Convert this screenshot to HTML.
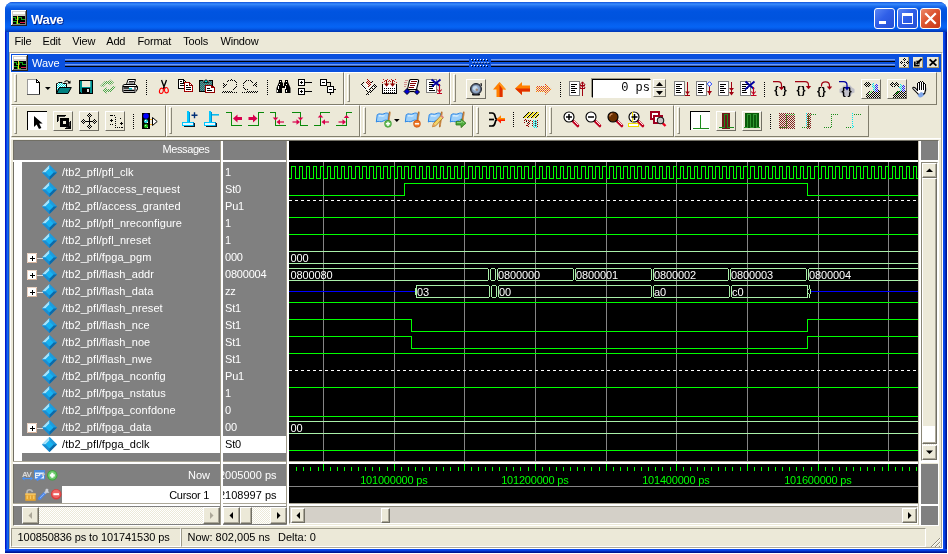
<!DOCTYPE html>
<html lang="en"><head><meta charset="utf-8"><title>Wave</title>
<style>
html,body{margin:0;padding:0;background:#fff;}
body{width:948px;height:554px;position:relative;overflow:hidden;font-family:"Liberation Sans",sans-serif;font-size:11px;color:#000;}
.a{position:absolute;}
.t{position:absolute;white-space:nowrap;line-height:13px;height:13px;}
#win{left:5px;top:2px;width:942px;height:551px;background:#0a3fd0;border-radius:8px 8px 0 0;overflow:hidden;}
#title{left:0;top:0;width:942px;height:30px;background:linear-gradient(to bottom,#0a47d0 0px,#2a78f3 1px,#3385f8 2.5px,#1f70ef 4px,#0657e3 7px,#0054e0 10px,#0053de 17px,#0560f0 22px,#0664f4 25px,#0458e6 27px,#0045cc 28.5px,#0033b3 30px);}
#lb{left:0;top:30px;width:4px;height:521px;background:linear-gradient(to right,#0019cf 0,#0019cf 1px,#0a3fe0 1px,#0a3fe0 2px,#1468ee 2px,#1468ee 3px,#0852de 3px);}
#rb{left:938px;top:30px;width:4px;height:521px;background:linear-gradient(to right,#0a48ee 0,#0a48ee 1px,#0540e0 1px,#0540e0 2px,#0028b4 2px,#0028b4 3px,#001494 3px);}
#bb{left:0;top:547px;width:942px;height:4px;background:linear-gradient(to bottom,#0a48ee 0,#0a48ee 1px,#0540e0 1px,#0540e0 2px,#0028b4 2px,#0028b4 3px,#001494 3px);}
#client{left:9px;top:32px;width:934px;height:517px;background:#ece9d8;}
.cap{position:absolute;top:6px;width:21px;height:21px;box-sizing:border-box;border:1px solid #fff;border-radius:3px;}
.tb{position:absolute;box-sizing:border-box;border-top:1px solid #fff;border-left:1px solid #fff;border-right:1px solid #807d6c;border-bottom:1px solid #807d6c;background:#ece9d8;}
.grip{position:absolute;width:3px;box-sizing:border-box;border-top:1px solid #fff;border-left:1px solid #fff;border-right:1px solid #8a8778;border-bottom:1px solid #8a8778;}
.sep{position:absolute;width:1px;height:15px;background:repeating-linear-gradient(to bottom,#000 0,#000 1px,transparent 1px,transparent 2px);}
.ic{position:absolute;width:16px;height:16px;overflow:visible;}
.raised{position:absolute;box-sizing:border-box;border-top:1px solid #fff;border-left:1px solid #fff;border-right:1px solid #716f64;border-bottom:1px solid #716f64;background:#ece9d8;}
.sunk{position:absolute;box-sizing:border-box;border-top:1px solid #404040;border-left:1px solid #404040;border-right:1px solid #fff;border-bottom:1px solid #fff;background:#fff;}
.sbb{position:absolute;width:16px;height:16px;box-sizing:border-box;border-top:1px solid #fff;border-left:1px solid #fff;border-right:1px solid #716f64;border-bottom:1px solid #716f64;background:#ece9d8;box-shadow:inset -1px -1px 0 #aca899;}
.dither{background-color:#f6f4ec;background-image:repeating-conic-gradient(#fff 0 25%,#ece9d8 0 50%);background-size:2px 2px;}
.nm{position:absolute;left:62px;white-space:nowrap;color:#fff;line-height:17px;height:17px;letter-spacing:0.08px;}
.vl{position:absolute;left:225px;white-space:nowrap;color:#fff;line-height:17px;height:17px;letter-spacing:-0.2px;}
.wv{position:absolute;white-space:nowrap;color:#fff;line-height:13px;height:13px;letter-spacing:-0.12px;}
.gl{position:absolute;white-space:nowrap;color:#00ff00;line-height:13px;height:13px;letter-spacing:-0.2px;}
</style></head>
<body>
<div id="root" class="a" style="left:0;top:0;width:948px;height:554px;will-change:transform;">
<div id="win" class="a"><div id="title" class="a"></div><div id="lb" class="a"></div><div id="rb" class="a"></div><div id="bb" class="a"></div></div>
<svg class="a" style="left:11px;top:10px" width="16" height="16" viewBox="0 0 16 16"><g shape-rendering="crispEdges"><rect x="0" y="0" width="16" height="16" fill="#d4d0c8"/><rect x="0" y="0" width="15" height="1" fill="#fff"/><rect x="0" y="0" width="1" height="15" fill="#fff"/><rect x="15" y="0" width="1" height="16" fill="#202020"/><rect x="0" y="15" width="16" height="1" fill="#202020"/><rect x="14" y="1" width="1" height="14" fill="#808080"/><rect x="1" y="14" width="14" height="1" fill="#808080"/><rect x="2" y="2" width="12" height="2" fill="#fff"/><rect x="2" y="6" width="12" height="8" fill="#000"/><path d="M2 7.5 H4.5 V9.5 H6 M7 9.5 H7.5 V7.5 H10.5 V9.5 H14 M2 11.5 H5.5 V13.5 H6 M7 13.5 H8.5 V12.5" fill="none" stroke="#18a818" stroke-width="1"/><rect x="6" y="6" width="1" height="8" fill="#f0e020"/><rect x="9" y="12" width="5" height="1" fill="#e01848"/></g></svg><div class="t" style="left:31px;top:12px;color:#fff;font-weight:bold;font-size:13px;line-height:15px;height:15px;letter-spacing:-0.3px;text-shadow:1px 1px 0 #0a2a90;">Wave</div><div class="cap" style="left:874px;top:8px;background:linear-gradient(135deg,#5a86f4 0%,#2f5fe8 45%,#2450d4 100%);"><div class="a" style="left:4px;top:12px;width:7px;height:3px;background:#fff;"></div></div><div class="cap" style="left:897px;top:8px;background:linear-gradient(135deg,#5a86f4 0%,#2f5fe8 45%,#2450d4 100%);"><div class="a" style="left:4px;top:4px;width:11px;height:11px;box-sizing:border-box;border:1px solid #fff;border-top-width:3px;"></div></div><div class="cap" style="left:920px;top:8px;background:linear-gradient(135deg,#ec8a6a 0%,#dc5430 45%,#c8381a 100%);"><svg class="a" style="left:0;top:0" width="19" height="19" viewBox="0 0 19 19"><path d="M5 5 L14 14 M14 5 L5 14" stroke="#fff" stroke-width="2.2" stroke-linecap="square"/></svg></div><div id="client" class="a"></div>
<div class="t" style="left:14.5px;top:35px;letter-spacing:-0.2px;">File</div><div class="t" style="left:42.5px;top:35px;letter-spacing:-0.2px;">Edit</div><div class="t" style="left:72.3px;top:35px;letter-spacing:-0.2px;">View</div><div class="t" style="left:106.3px;top:35px;letter-spacing:-0.2px;">Add</div><div class="t" style="left:137.5px;top:35px;letter-spacing:-0.2px;">Format</div><div class="t" style="left:183.3px;top:35px;letter-spacing:-0.2px;">Tools</div><div class="t" style="left:220.5px;top:35px;letter-spacing:-0.2px;">Window</div><div class="a" style="left:9px;top:52px;width:934px;height:497px;box-sizing:border-box;border:1px solid;border-color:#aca899 #fff #fff #aca899;"></div><div class="a" style="left:10px;top:53px;width:932px;height:495px;box-sizing:border-box;border:1px solid;border-color:#fff #aca899 #aca899 #fff;"></div>
<div class="a" style="left:11px;top:54px;width:930px;height:18px;background:#0a50de;"></div><svg class="a" style="left:12px;top:55px" width="16" height="16" viewBox="0 0 16 16"><g shape-rendering="crispEdges"><rect x="0" y="0" width="16" height="16" fill="#d4d0c8"/><rect x="0" y="0" width="15" height="1" fill="#fff"/><rect x="0" y="0" width="1" height="15" fill="#fff"/><rect x="15" y="0" width="1" height="16" fill="#202020"/><rect x="0" y="15" width="16" height="1" fill="#202020"/><rect x="14" y="1" width="1" height="14" fill="#808080"/><rect x="1" y="14" width="14" height="1" fill="#808080"/><rect x="2" y="2" width="12" height="2" fill="#fff"/><rect x="2" y="6" width="12" height="8" fill="#000"/><path d="M2 7.5 H4.5 V9.5 H6 M7 9.5 H7.5 V7.5 H10.5 V9.5 H14 M2 11.5 H5.5 V13.5 H6 M7 13.5 H8.5 V12.5" fill="none" stroke="#18a818" stroke-width="1"/><rect x="6" y="6" width="1" height="8" fill="#f0e020"/><rect x="9" y="12" width="5" height="1" fill="#e01848"/></g></svg><div class="t" style="left:32px;top:57px;color:#fff;">Wave</div><div class="a" style="left:65px;top:59px;width:404px;height:1px;background:#6f9df2;"></div><div class="a" style="left:65px;top:60px;width:404px;height:1px;background:#3a62c0;"></div><div class="a" style="left:65px;top:61px;width:404px;height:1px;background:#000;"></div><div class="a" style="left:65px;top:64px;width:404px;height:1px;background:#6f9df2;"></div><div class="a" style="left:65px;top:65px;width:404px;height:1px;background:#3a62c0;"></div><div class="a" style="left:65px;top:66px;width:404px;height:1px;background:#000;"></div><div class="a" style="left:491px;top:59px;width:404px;height:1px;background:#6f9df2;"></div><div class="a" style="left:491px;top:60px;width:404px;height:1px;background:#3a62c0;"></div><div class="a" style="left:491px;top:61px;width:404px;height:1px;background:#000;"></div><div class="a" style="left:491px;top:64px;width:404px;height:1px;background:#6f9df2;"></div><div class="a" style="left:491px;top:65px;width:404px;height:1px;background:#3a62c0;"></div><div class="a" style="left:491px;top:66px;width:404px;height:1px;background:#000;"></div><svg class="a" style="left:470px;top:58px" width="20" height="10" viewBox="0 0 20 10"><rect x="2" y="2" width="1" height="1" fill="#000"/><rect x="1" y="1" width="1" height="1" fill="#fff"/><rect x="5" y="2" width="1" height="1" fill="#000"/><rect x="4" y="1" width="1" height="1" fill="#fff"/><rect x="8" y="2" width="1" height="1" fill="#000"/><rect x="7" y="1" width="1" height="1" fill="#fff"/><rect x="11" y="2" width="1" height="1" fill="#000"/><rect x="10" y="1" width="1" height="1" fill="#fff"/><rect x="14" y="2" width="1" height="1" fill="#000"/><rect x="13" y="1" width="1" height="1" fill="#fff"/><rect x="17" y="2" width="1" height="1" fill="#000"/><rect x="16" y="1" width="1" height="1" fill="#fff"/><rect x="3.5" y="5" width="1" height="1" fill="#000"/><rect x="2.5" y="4" width="1" height="1" fill="#fff"/><rect x="6.5" y="5" width="1" height="1" fill="#000"/><rect x="5.5" y="4" width="1" height="1" fill="#fff"/><rect x="9.5" y="5" width="1" height="1" fill="#000"/><rect x="8.5" y="4" width="1" height="1" fill="#fff"/><rect x="12.5" y="5" width="1" height="1" fill="#000"/><rect x="11.5" y="4" width="1" height="1" fill="#fff"/><rect x="15.5" y="5" width="1" height="1" fill="#000"/><rect x="14.5" y="4" width="1" height="1" fill="#fff"/><rect x="18.5" y="5" width="1" height="1" fill="#000"/><rect x="17.5" y="4" width="1" height="1" fill="#fff"/><rect x="2" y="8" width="1" height="1" fill="#000"/><rect x="1" y="7" width="1" height="1" fill="#fff"/><rect x="5" y="8" width="1" height="1" fill="#000"/><rect x="4" y="7" width="1" height="1" fill="#fff"/><rect x="8" y="8" width="1" height="1" fill="#000"/><rect x="7" y="7" width="1" height="1" fill="#fff"/><rect x="11" y="8" width="1" height="1" fill="#000"/><rect x="10" y="7" width="1" height="1" fill="#fff"/><rect x="14" y="8" width="1" height="1" fill="#000"/><rect x="13" y="7" width="1" height="1" fill="#fff"/><rect x="17" y="8" width="1" height="1" fill="#000"/><rect x="16" y="7" width="1" height="1" fill="#fff"/></svg><div class="a" style="left:899px;top:57px;width:10px;height:11px;background:#ece9d8;box-shadow:inset -1px -1px 0 #a89868;"></div><svg class="a" style="left:899px;top:57px" width="12" height="11" viewBox="0 0 12 11"><g shape-rendering="crispEdges"><rect x="5" y="1" width="1" height="1" fill="#000"/><rect x="5" y="3" width="1" height="1" fill="#000"/><rect x="5" y="5" width="1" height="1" fill="#000"/><rect x="5" y="7" width="1" height="1" fill="#000"/><rect x="5" y="9" width="1" height="1" fill="#000"/><rect x="1" y="5" width="1" height="1" fill="#000"/><rect x="3" y="5" width="1" height="1" fill="#000"/><rect x="7" y="5" width="1" height="1" fill="#000"/><rect x="9" y="5" width="1" height="1" fill="#000"/><rect x="4" y="2" width="1" height="1" fill="#000"/><rect x="6" y="2" width="1" height="1" fill="#000"/><rect x="2" y="4" width="1" height="1" fill="#000"/><rect x="2" y="6" width="1" height="1" fill="#000"/><rect x="8" y="4" width="1" height="1" fill="#000"/><rect x="8" y="6" width="1" height="1" fill="#000"/><rect x="4" y="8" width="1" height="1" fill="#000"/><rect x="6" y="8" width="1" height="1" fill="#000"/></g></svg><div class="a" style="left:913px;top:57px;width:10px;height:11px;background:#ece9d8;box-shadow:inset -1px -1px 0 #a89868;"></div><svg class="a" style="left:913px;top:57px" width="12" height="11" viewBox="0 0 12 11"><path d="M1.8 4.5 V8.6 H6.5" stroke="#000" stroke-width="1.7" fill="none"/><path d="M3.5 7 L8.6 1.9" stroke="#000" stroke-width="2"/><path d="M2.6 3.8 H6.6 V7.8 Z" fill="#000"/></svg><div class="a" style="left:927px;top:57px;width:12px;height:11px;background:#ece9d8;box-shadow:inset -1px -1px 0 #a89868;"></div><svg class="a" style="left:927px;top:57px" width="12" height="11" viewBox="0 0 12 11"><path d="M2.6 2.4 L9.4 8.6 M9.4 2.4 L2.6 8.6" stroke="#000" stroke-width="1.9" fill="none"/></svg>
<svg class="a" width="0" height="0" style="left:0;top:0"><defs><pattern id="pcy" width="2" height="2" patternUnits="userSpaceOnUse"><rect width="2" height="2" fill="#fff"/><rect width="1" height="1" fill="#00e0e0"/><rect x="1" y="1" width="1" height="1" fill="#00e0e0"/></pattern><pattern id="pgr" width="2" height="2" patternUnits="userSpaceOnUse"><rect width="1" height="1" fill="#4aa84a"/><rect x="1" y="1" width="1" height="1" fill="#4aa84a"/></pattern><pattern id="ptl" width="2" height="2" patternUnits="userSpaceOnUse"><rect width="2" height="2" fill="#008080"/><rect width="1" height="1" fill="#808080"/><rect x="1" y="1" width="1" height="1" fill="#808080"/></pattern><pattern id="por" width="2" height="2" patternUnits="userSpaceOnUse"><rect width="1" height="1" fill="#ff8000"/><rect x="1" y="1" width="1" height="1" fill="#e04020"/></pattern><pattern id="pbk" width="2" height="2" patternUnits="userSpaceOnUse"><rect width="1" height="1" fill="#000"/><rect x="1" y="1" width="1" height="1" fill="#000"/></pattern><pattern id="prd" width="2" height="2" patternUnits="userSpaceOnUse"><rect width="1" height="1" fill="#802020"/><rect x="1" y="1" width="1" height="1" fill="#802020"/></pattern><pattern id="pcb" width="2" height="2" patternUnits="userSpaceOnUse"><rect width="1" height="1" fill="#00e8f0"/><rect x="1" y="1" width="1" height="1" fill="#00e8f0"/></pattern><pattern id="pbl" width="2" height="2" patternUnits="userSpaceOnUse"><rect width="1" height="1" fill="#2020ff"/><rect x="1" y="1" width="1" height="1" fill="#2020ff"/></pattern><pattern id="pwh" width="2" height="2" patternUnits="userSpaceOnUse"><rect width="1" height="1" fill="#fff"/><rect x="1" y="1" width="1" height="1" fill="#fff"/></pattern></defs></svg><div class="tb" style="left:11px;top:72px;width:333px;height:33px;"></div><div class="grip" style="left:14px;top:74px;height:28px;"></div><div class="tb" style="left:344px;top:72px;width:106px;height:33px;"></div><div class="grip" style="left:347px;top:74px;height:28px;"></div><div class="tb" style="left:450px;top:72px;width:487px;height:33px;"></div><div class="grip" style="left:453px;top:74px;height:28px;"></div><div class="tb" style="left:11px;top:105px;width:155px;height:32px;"></div><div class="grip" style="left:14px;top:107px;height:27px;"></div><div class="tb" style="left:166px;top:105px;width:194px;height:32px;"></div><div class="grip" style="left:169px;top:107px;height:27px;"></div><div class="tb" style="left:360px;top:105px;width:113px;height:32px;"></div><div class="grip" style="left:363px;top:107px;height:27px;"></div><div class="tb" style="left:473px;top:105px;width:73px;height:32px;"></div><div class="grip" style="left:476px;top:107px;height:27px;"></div><div class="tb" style="left:546px;top:105px;width:128px;height:32px;"></div><div class="grip" style="left:549px;top:107px;height:27px;"></div><div class="tb" style="left:674px;top:105px;width:195px;height:32px;"></div><div class="grip" style="left:677px;top:107px;height:27px;"></div><svg class="ic" style="left:27px;top:79px" viewBox="0 0 16 16"><g shape-rendering="crispEdges"><rect x="1" y="1" width="11" height="14" fill="#fff"/><rect x="0" y="0" width="1" height="16" fill="#9a9a9a"/><rect x="0" y="0" width="10" height="1" fill="#9a9a9a"/><rect x="12" y="3" width="1" height="13" fill="#000"/><rect x="0" y="15" width="13" height="1" fill="#5a5a5a"/><rect x="9" y="0" width="1" height="4" fill="#000"/><rect x="9" y="3" width="4" height="1" fill="#000"/></g><path d="M9.5 0.5 L12.5 3.5" stroke="#000" stroke-width="1" fill="none"/><rect x="10" y="2" width="1" height="1" fill="#fff"/></svg><svg class="a" style="left:45px;top:87px" width="6" height="3" viewBox="0 0 6 3"><path d="M0 0 H5.6 L2.8 3 Z" fill="#000"/></svg><svg class="ic" style="left:56px;top:80px" viewBox="0 0 16 16"><path d="M0.5 13.5 V3.5 H1.5 L2.5 2.5 H6 L7 3.5 H10.5 V7.5 H3.5 Z" fill="url(#pcy)" stroke="#000"/><path d="M0.5 13.5 L3.5 7.5 H15.3 L12 13.5 Z" fill="#008080" stroke="#000"/><path d="M8.5 2.2 C9.5 0.2 12.5 0.2 13.5 3" fill="none" stroke="#000" stroke-width="1.1"/><path d="M11.2 3.5 H14.5 V0.6 Z" fill="#000"/></svg><svg class="ic" style="left:79px;top:80px" viewBox="0 0 16 16"><g shape-rendering="crispEdges"><rect x="0" y="0" width="14" height="14" fill="#000"/><rect x="1" y="1" width="12" height="12" fill="#009090"/><rect x="3" y="1" width="8" height="6" fill="#ece9d8"/><rect x="11" y="1" width="1" height="6" fill="#40b0b0"/><rect x="3" y="8" width="8" height="5" fill="#000"/><rect x="8" y="9" width="2" height="3" fill="#e0e0e0"/><rect x="1" y="12" width="1" height="1" fill="#000"/></g></svg><svg class="ic" style="left:100px;top:79px" viewBox="0 0 16 16"><path d="M0 7 L5 2 H9.5 V0 L14 3.5 L9.5 7 V5 H6 L3 8 Z" fill="url(#pgr)"/><path d="M16 8 L11 13 H6.5 V15 L2 11.5 L6.5 8 V10 H10 L13 7 Z" fill="url(#pgr)"/></svg><svg class="ic" style="left:122px;top:79px" viewBox="0 0 16 16"><path d="M4.5 5.5 L6 0.5 H13.5 L12 5.5" fill="#fff" stroke="#000"/><path d="M7 2.5 H12 M6.5 4 H11.5" stroke="#000" stroke-width="0.9"/><path d="M0.8 7 Q0.8 5.5 3 5.5 H13.5 L15.5 7.5 V10.5 L13 13.5 H2 Q0.8 13.5 0.8 12 Z" fill="#fff" stroke="#000"/><path d="M1 7.5 H13 L15.3 7.5 M13 7.5 V13.5" fill="none" stroke="#000"/><rect x="7" y="9" width="3" height="1.5" fill="#00c8d0"/><path d="M1.5 9 H7 M1.5 11.5 H12.5" stroke="#000" stroke-width="1.3"/><rect x="14" y="8" width="1" height="1" fill="#808080"/><rect x="14" y="10" width="1" height="1" fill="#808080"/><rect x="13" y="12" width="1" height="1" fill="#808080"/></svg><div class="sep" style="left:146px;top:80px;"></div><svg class="ic" style="left:159px;top:80px" viewBox="0 0 16 16"><path d="M2.5 0 L5.8 9 M7.5 0 L4.2 9" stroke="#000" stroke-width="1.3" fill="none"/><ellipse cx="2.4" cy="10.8" rx="1.9" ry="2.7" fill="none" stroke="#ff0000" stroke-width="1.1" transform="rotate(15 2.4 10.8)"/><ellipse cx="7.4" cy="10.2" rx="1.9" ry="2.7" fill="none" stroke="#ff0000" stroke-width="1.1" transform="rotate(-10 7.4 10.2)"/></svg><svg class="ic" style="left:178px;top:79px" viewBox="0 0 16 16"><g shape-rendering="crispEdges"><path d="M0.5 0.5 H5.5 V3.5 H7.5 V9.5 H0.5 Z" fill="#fff" stroke="#000"/><rect x="5" y="0" width="1" height="1" fill="#000"/><rect x="6" y="1" width="1" height="1" fill="#000"/><rect x="7" y="2" width="1" height="1" fill="#000"/><rect x="2" y="2" width="2" height="1" fill="#000"/><rect x="2" y="4" width="4" height="1" fill="#000"/><rect x="2" y="6" width="4" height="1" fill="#000"/><path d="M6.5 3.5 H11.5 L14.5 6.5 V12.5 H6.5 Z" fill="#fff" stroke="#c00000" stroke-dasharray="1 1"/><path d="M6.5 3.5 H11.5 L14.5 6.5 V12.5 H6.5 Z" fill="none" stroke="#800000" stroke-dasharray="1 1" stroke-dashoffset="1"/><rect x="11" y="4" width="1" height="3" fill="#800000"/><rect x="11" y="6" width="3" height="1" fill="#800000"/><rect x="8" y="6" width="2" height="1" fill="#000"/><rect x="8" y="8" width="5" height="1" fill="#000"/><rect x="8" y="10" width="5" height="1" fill="#000"/></g></svg><svg class="ic" style="left:199px;top:79px" viewBox="0 0 16 16"><g shape-rendering="crispEdges"><rect x="0.5" y="1.5" width="13" height="11" rx="1" fill="url(#ptl)" stroke="#000"/><rect x="4" y="1" width="6" height="3" fill="#808080"/><path d="M4.5 3.5 L7 0.5 L9.5 3.5 Z" fill="#00e0e0" stroke="#000" stroke-width="0.8" shape-rendering="auto"/><path d="M6.5 6.5 H12.5 L15.5 8.5 V13.5 H6.5 Z" fill="#fff" stroke="#900000"/><rect x="12" y="7" width="1" height="2" fill="#900000"/><rect x="12" y="8" width="3" height="1" fill="#900000"/><rect x="8" y="9" width="3" height="1" fill="#000"/><rect x="8" y="11" width="5" height="1" fill="#000"/></g></svg><svg class="ic" style="left:222px;top:79px" viewBox="0 0 16 16"><g shape-rendering="crispEdges"><rect x="0" y="13" width="1" height="1" fill="#000"/><rect x="1" y="4" width="1" height="1" fill="#000"/><rect x="1" y="6" width="1" height="1" fill="#000"/><rect x="1" y="8" width="1" height="1" fill="#000"/><rect x="1" y="12" width="1" height="1" fill="#000"/><rect x="2" y="5" width="1" height="1" fill="#000"/><rect x="2" y="7" width="1" height="1" fill="#000"/><rect x="2" y="13" width="1" height="1" fill="#000"/><rect x="3" y="6" width="1" height="1" fill="#000"/><rect x="3" y="12" width="1" height="1" fill="#000"/><rect x="4" y="5" width="1" height="1" fill="#000"/><rect x="4" y="13" width="1" height="1" fill="#000"/><rect x="5" y="2" width="1" height="1" fill="#000"/><rect x="5" y="12" width="1" height="1" fill="#000"/><rect x="6" y="1" width="1" height="1" fill="#000"/><rect x="6" y="13" width="1" height="1" fill="#000"/><rect x="7" y="12" width="1" height="1" fill="#000"/><rect x="8" y="1" width="1" height="1" fill="#000"/><rect x="8" y="13" width="1" height="1" fill="#000"/><rect x="9" y="0" width="1" height="1" fill="#000"/><rect x="9" y="12" width="1" height="1" fill="#000"/><rect x="10" y="1" width="1" height="1" fill="#000"/><rect x="10" y="13" width="1" height="1" fill="#000"/><rect x="11" y="10" width="1" height="1" fill="#000"/><rect x="12" y="1" width="1" height="1" fill="#000"/><rect x="12" y="9" width="1" height="1" fill="#000"/><rect x="12" y="13" width="1" height="1" fill="#000"/><rect x="13" y="2" width="1" height="1" fill="#000"/><rect x="13" y="8" width="1" height="1" fill="#000"/><rect x="14" y="3" width="1" height="1" fill="#000"/><rect x="14" y="5" width="1" height="1" fill="#000"/><rect x="14" y="7" width="1" height="1" fill="#000"/><rect x="14" y="13" width="1" height="1" fill="#000"/></g></svg><svg class="ic" style="left:242px;top:79px" viewBox="0 0 16 16"><g shape-rendering="crispEdges"><rect x="0" y="13" width="1" height="1" fill="#000"/><rect x="1" y="4" width="1" height="1" fill="#000"/><rect x="1" y="6" width="1" height="1" fill="#000"/><rect x="1" y="8" width="1" height="1" fill="#000"/><rect x="2" y="3" width="1" height="1" fill="#000"/><rect x="2" y="9" width="1" height="1" fill="#000"/><rect x="2" y="13" width="1" height="1" fill="#000"/><rect x="3" y="2" width="1" height="1" fill="#000"/><rect x="3" y="10" width="1" height="1" fill="#000"/><rect x="4" y="1" width="1" height="1" fill="#000"/><rect x="4" y="13" width="1" height="1" fill="#000"/><rect x="5" y="10" width="1" height="1" fill="#000"/><rect x="5" y="12" width="1" height="1" fill="#000"/><rect x="6" y="1" width="1" height="1" fill="#000"/><rect x="6" y="13" width="1" height="1" fill="#000"/><rect x="7" y="12" width="1" height="1" fill="#000"/><rect x="8" y="1" width="1" height="1" fill="#000"/><rect x="8" y="13" width="1" height="1" fill="#000"/><rect x="9" y="2" width="1" height="1" fill="#000"/><rect x="9" y="12" width="1" height="1" fill="#000"/><rect x="10" y="3" width="1" height="1" fill="#000"/><rect x="10" y="13" width="1" height="1" fill="#000"/><rect x="11" y="6" width="1" height="1" fill="#000"/><rect x="11" y="12" width="1" height="1" fill="#000"/><rect x="12" y="5" width="1" height="1" fill="#000"/><rect x="12" y="13" width="1" height="1" fill="#000"/><rect x="13" y="4" width="1" height="1" fill="#000"/><rect x="13" y="6" width="1" height="1" fill="#000"/><rect x="13" y="12" width="1" height="1" fill="#000"/><rect x="14" y="3" width="1" height="1" fill="#000"/><rect x="14" y="5" width="1" height="1" fill="#000"/><rect x="14" y="7" width="1" height="1" fill="#000"/><rect x="14" y="13" width="1" height="1" fill="#000"/><rect x="15" y="12" width="1" height="1" fill="#000"/></g></svg><div class="sep" style="left:267px;top:80px;"></div><svg class="ic" style="left:276px;top:80px" viewBox="0 0 16 16"><path d="M3 0 H6 V2 L7 3 V6 H8 V3 L9 2 V0 H12 V2 L14.5 8 V13 H9 V8 H6 V13 H0.5 V8 L3 2 Z" fill="#000"/><g shape-rendering="crispEdges"><rect x="2" y="6" width="1" height="3" fill="#fff"/><rect x="1" y="10" width="1" height="2" fill="#fff"/><rect x="9" y="6" width="1" height="3" fill="#fff"/><rect x="10" y="10" width="1" height="2" fill="#fff"/><rect x="4" y="1" width="1" height="1" fill="#fff"/><rect x="10" y="1" width="1" height="1" fill="#fff"/><rect x="3" y="4" width="1" height="1" fill="#fff"/><rect x="10" y="4" width="1" height="1" fill="#fff"/></g></svg><svg class="ic" style="left:298px;top:79px" viewBox="0 0 16 16"><g shape-rendering="crispEdges"><rect x="0.5" y="0.5" width="6" height="6" fill="#fff" stroke="#000"/><rect x="0.5" y="9.5" width="6" height="6" fill="#fff" stroke="#000"/><rect x="2" y="3" width="3" height="1" fill="#000"/><rect x="3" y="2" width="1" height="3" fill="#000"/><rect x="2" y="12" width="3" height="1" fill="#000"/><rect x="3" y="11" width="1" height="3" fill="#000"/><rect x="7" y="3" width="7" height="1" fill="#000"/><rect x="7" y="12" width="7" height="1" fill="#000"/></g></svg><svg class="ic" style="left:320px;top:79px" viewBox="0 0 16 16"><g shape-rendering="crispEdges"><rect x="0.5" y="0.5" width="6" height="6" fill="#fff" stroke="#000"/><rect x="7.5" y="7.5" width="6" height="6" fill="#fff" stroke="#000"/><rect x="2" y="3" width="3" height="1" fill="#000"/><rect x="9" y="10" width="3" height="1" fill="#000"/><rect x="7" y="3" width="4" height="1" fill="#000"/><rect x="10" y="3" width="1" height="5" fill="#000"/><rect x="14" y="10" width="2" height="1" fill="#000"/><rect x="10" y="14" width="1" height="2" fill="#000"/></g></svg><svg class="ic" style="left:361px;top:79px" viewBox="0 0 16 16"><g shape-rendering="crispEdges"><path d="M0.5 6.5 L7.5 0.5 L15.5 8.5 L8.5 15.5 Z" fill="url(#pwh)"/><rect x="0" y="5" width="1" height="1" fill="#000"/><rect x="1" y="6" width="1" height="1" fill="#000"/><rect x="2" y="7" width="1" height="1" fill="#000"/><rect x="3" y="8" width="1" height="1" fill="#000"/><rect x="4" y="9" width="1" height="1" fill="#000"/><rect x="5" y="11" width="1" height="1" fill="#000"/><rect x="6" y="12" width="1" height="1" fill="#000"/><rect x="7" y="13" width="1" height="1" fill="#000"/><rect x="5" y="15" width="1" height="1" fill="#000"/><rect x="6" y="14" width="1" height="1" fill="#000"/><rect x="8" y="12" width="1" height="1" fill="#000"/><rect x="9" y="11" width="1" height="1" fill="#000"/><rect x="10" y="12" width="1" height="1" fill="#000"/><rect x="11" y="11" width="1" height="1" fill="#000"/><rect x="12" y="10" width="1" height="1" fill="#000"/><rect x="13" y="9" width="1" height="1" fill="#000"/><rect x="14" y="8" width="1" height="1" fill="#000"/><rect x="15" y="7" width="1" height="1" fill="#000"/><rect x="12" y="6" width="1" height="1" fill="#000"/><rect x="13" y="7" width="1" height="1" fill="#000"/><rect x="11" y="7" width="1" height="1" fill="#000"/><rect x="10" y="8" width="1" height="1" fill="#000"/><rect x="11" y="9" width="1" height="1" fill="#000"/><rect x="9" y="9" width="1" height="1" fill="#000"/><rect x="8" y="10" width="1" height="1" fill="#000"/><rect x="9" y="13" width="1" height="1" fill="#000"/><rect x="7" y="15" width="1" height="1" fill="#000"/><rect x="1" y="4" width="1" height="1" fill="#000"/><rect x="2" y="3" width="1" height="1" fill="#000"/><rect x="10" y="3" width="1" height="1" fill="#000"/><rect x="11" y="2" width="1" height="1" fill="#000"/><rect x="13" y="5" width="1" height="1" fill="#000"/><rect x="14" y="6" width="1" height="1" fill="#000"/><rect x="6" y="0" width="1" height="1" fill="#a00000"/><rect x="7" y="1" width="1" height="1" fill="#a00000"/><rect x="6" y="2" width="1" height="1" fill="#a00000"/><rect x="7" y="3" width="1" height="1" fill="#a00000"/><rect x="6" y="4" width="1" height="1" fill="#a00000"/><rect x="8" y="4" width="1" height="1" fill="#a00000"/><rect x="7" y="5" width="1" height="1" fill="#a00000"/><rect x="9" y="5" width="1" height="1" fill="#a00000"/><rect x="8" y="6" width="1" height="1" fill="#a00000"/><rect x="5" y="3" width="1" height="1" fill="#a00000"/><rect x="8" y="2" width="1" height="1" fill="#a00000"/><rect x="9" y="3" width="1" height="1" fill="#a00000"/><rect x="7" y="7" width="1" height="1" fill="#a00000"/></g></svg><svg class="ic" style="left:382px;top:79px" viewBox="0 0 16 16"><g shape-rendering="crispEdges"><rect x="1" y="6" width="14" height="8" fill="#fff"/><rect x="0" y="5" width="1" height="10" fill="#000"/><rect x="14" y="5" width="1" height="10" fill="#000"/><rect x="0" y="14" width="15" height="1" fill="#000"/><rect x="2" y="9" width="1" height="1" fill="#000"/><rect x="4" y="9" width="1" height="1" fill="#000"/><rect x="6" y="9" width="1" height="1" fill="#000"/><rect x="8" y="9" width="1" height="1" fill="#000"/><rect x="10" y="9" width="1" height="1" fill="#000"/><rect x="12" y="9" width="1" height="1" fill="#000"/><rect x="2" y="11" width="1" height="1" fill="#000"/><rect x="4" y="11" width="1" height="1" fill="#000"/><rect x="6" y="11" width="1" height="1" fill="#000"/><rect x="8" y="11" width="1" height="1" fill="#000"/><rect x="10" y="11" width="1" height="1" fill="#000"/><rect x="12" y="11" width="1" height="1" fill="#000"/><rect x="2" y="13" width="1" height="1" fill="#000"/><rect x="4" y="13" width="1" height="1" fill="#000"/><rect x="6" y="13" width="1" height="1" fill="#000"/><rect x="8" y="13" width="1" height="1" fill="#000"/><rect x="10" y="13" width="1" height="1" fill="#000"/><rect x="12" y="13" width="1" height="1" fill="#000"/><rect x="1" y="0" width="1" height="1" fill="#c02020"/><rect x="3" y="1" width="1" height="1" fill="#c02020"/><rect x="5" y="0" width="1" height="1" fill="#c02020"/><rect x="7" y="1" width="1" height="1" fill="#c02020"/><rect x="9" y="0" width="1" height="1" fill="#c02020"/><rect x="11" y="1" width="1" height="1" fill="#c02020"/><rect x="13" y="0" width="1" height="1" fill="#c02020"/><rect x="2" y="2" width="1" height="1" fill="#c02020"/><rect x="6" y="2" width="1" height="1" fill="#c02020"/><rect x="8" y="2" width="1" height="1" fill="#c02020"/><rect x="12" y="2" width="1" height="1" fill="#c02020"/><rect x="0" y="3" width="1" height="1" fill="#c02020"/><rect x="14" y="3" width="1" height="1" fill="#c02020"/><rect x="4" y="1" width="1" height="5" fill="#900000"/><rect x="10" y="1" width="1" height="5" fill="#900000"/></g><path d="M2 4.5 H7.2 L4.6 7.8 Z M8 4.5 H13.2 L10.6 7.8 Z" fill="#900000"/></svg><svg class="ic" style="left:404px;top:79px" viewBox="0 0 16 16"><path d="M5.5 1.5 Q6 0.5 7 0.5 H13 Q15 0.5 14.5 2.5 L12.5 10.5 H3.5 Z" fill="#fff" stroke="#000" stroke-width="1.1"/><g shape-rendering="crispEdges"><rect x="7" y="2" width="1" height="1" fill="#800000"/><rect x="8" y="2" width="1" height="1" fill="#800000"/><rect x="9" y="2" width="1" height="1" fill="#800000"/><rect x="10" y="2" width="1" height="1" fill="#800000"/><rect x="11" y="2" width="1" height="1" fill="#800000"/><rect x="12" y="2" width="1" height="1" fill="#800000"/><rect x="6" y="4" width="1" height="1" fill="#800000"/><rect x="7" y="4" width="1" height="1" fill="#800000"/><rect x="8" y="4" width="1" height="1" fill="#800000"/><rect x="9" y="4" width="1" height="1" fill="#800000"/><rect x="10" y="4" width="1" height="1" fill="#800000"/><rect x="11" y="4" width="1" height="1" fill="#800000"/><rect x="6" y="6" width="1" height="1" fill="#800000"/><rect x="7" y="6" width="1" height="1" fill="#800000"/><rect x="8" y="6" width="1" height="1" fill="#800000"/><rect x="9" y="6" width="1" height="1" fill="#800000"/><rect x="10" y="6" width="1" height="1" fill="#800000"/><rect x="5" y="8" width="1" height="1" fill="#800000"/><rect x="6" y="8" width="1" height="1" fill="#800000"/><rect x="7" y="8" width="1" height="1" fill="#800000"/><rect x="8" y="8" width="1" height="1" fill="#800000"/><rect x="9" y="8" width="1" height="1" fill="#800000"/><rect x="1" y="1" width="1" height="1" fill="#d09090"/><rect x="2" y="1" width="1" height="1" fill="#d09090"/><rect x="3" y="1" width="1" height="1" fill="#d09090"/><rect x="0" y="3" width="1" height="1" fill="#d09090"/><rect x="1" y="3" width="1" height="1" fill="#d09090"/><rect x="2" y="3" width="1" height="1" fill="#d09090"/><rect x="0" y="5" width="1" height="1" fill="#d09090"/><rect x="1" y="5" width="1" height="1" fill="#d09090"/><rect x="2" y="5" width="1" height="1" fill="#d09090"/><rect x="0" y="7" width="1" height="1" fill="#d09090"/><rect x="1" y="7" width="1" height="1" fill="#d09090"/></g><path d="M3 9.5 L6 12.5 L3 15.5 L0 12.5 Z M13 10.5 L15.6 13 L13 15.5 L10.4 13 Z" fill="#0000d0" stroke="#000" stroke-width="0.9"/><path d="M6 12.5 H10.5" stroke="#000" stroke-width="1.2"/></svg><svg class="ic" style="left:426px;top:79px" viewBox="0 0 16 16"><g shape-rendering="crispEdges"><rect x="0.5" y="0.5" width="10" height="13" fill="#fff" stroke="#808080"/><rect x="3" y="3" width="5" height="1" fill="#000"/><rect x="3" y="5" width="4" height="1" fill="#000"/><rect x="3" y="7" width="5" height="1" fill="#000"/><rect x="3" y="9" width="4" height="1" fill="#000"/><rect x="3" y="11" width="6" height="1" fill="#000"/></g><path d="M5.5 0.5 L14 7 M14.5 0.5 L6 7.5" stroke="#0000a0" stroke-width="1.8"/><path d="M13.5 5 V14 M11 14.5 H16 M11.3 10.5 L13.5 13 L15.7 10.5" stroke="#c00020" stroke-width="1.1" fill="none"/></svg><div class="raised" style="left:466px;top:79px;width:20px;height:20px;"><svg class="ic" style="left:3px;top:3px" viewBox="0 0 16 16"><rect x="2" y="10.5" width="8" height="2" rx="1" fill="#000"/><circle cx="6" cy="6" r="5.5" fill="#5a6478" stroke="#20242c"/><circle cx="6" cy="6" r="4" fill="#8fa8c8"/><circle cx="5.3" cy="5.3" r="2.4" fill="#c8dcec"/><circle cx="6.8" cy="6.8" r="1.3" fill="#a08878"/><path d="M9.5 1.5 L11.5 0.5 V3" fill="none" stroke="#303030"/></svg></div><svg class="ic" style="left:493px;top:82px" viewBox="0 0 16 16"><path d="M6.5 0 L13 7.5 H9.5 V15 H3.5 V7.5 H0 Z" fill="#ff8000"/><path d="M6.5 2.5 L9.5 7.5 V15 H6.5 Z" fill="#e03000"/><path d="M6.5 0 L13 7.5 H11 L6.5 2.5Z" fill="#ff9a20"/></svg><svg class="ic" style="left:515px;top:82px" viewBox="0 0 16 16"><path d="M0 6.5 L7 0 V3.5 H15 V9.5 H7 V13 Z" fill="#ff8000"/><path d="M2.5 6.5 H15 V9.5 H7 V13 L0 6.5 Z" fill="#e03000"/></svg><svg class="ic" style="left:536px;top:82.5px" viewBox="0 0 16 16"><path d="M15.5 6 L9 0 V3 H0 V9 H9 V12 Z" fill="url(#por)"/></svg><div class="sep" style="left:560px;top:82px;"></div><svg class="ic" style="left:569px;top:81px" viewBox="0 0 16 16"><g shape-rendering="crispEdges"><rect x="0.5" y="0.5" width="10" height="14" fill="#fff" stroke="#808080"/><rect x="2" y="3" width="6" height="1" fill="#000"/><rect x="2" y="5" width="4" height="1" fill="#000"/><rect x="2" y="7" width="6" height="1" fill="#000"/><rect x="2" y="9" width="4" height="1" fill="#000"/><rect x="2" y="11" width="5" height="1" fill="#000"/><rect x="13" y="1" width="1" height="14" fill="#a00010"/><rect x="11" y="4" width="5" height="1" fill="#a00010"/><rect x="11" y="7" width="5" height="1" fill="#a00010"/></g><path d="M10.8 4 L13.5 0.8 L16.2 4 M10.8 7 L13.5 3.8 L16.2 7" stroke="#a00010" fill="none"/></svg><div class="a" style="left:592px;top:79px;width:59px;height:19px;box-sizing:border-box;background:#fff;border-top:1px solid #000;border-left:1px solid #000;border-right:1px solid #fff;border-bottom:1px solid #fff;box-shadow:-1px -1px 0 #9d9a8a;"></div><div class="t" style="left:600px;top:82px;width:50px;text-align:right;font-family:'Liberation Mono',monospace;font-size:12px;">0 ps</div><div class="raised" style="left:653px;top:79px;width:13px;height:9px;"><svg class="a" style="left:2px;top:2px" width="7" height="4" viewBox="0 0 7 4"><path d="M0 4 H7 L3.5 0 Z" fill="#000"/></svg></div><div class="raised" style="left:653px;top:88px;width:13px;height:9px;"><svg class="a" style="left:2px;top:2px" width="7" height="4" viewBox="0 0 7 4"><path d="M0 0 H7 L3.5 4 Z" fill="#000"/></svg></div><svg class="ic" style="left:674px;top:81px" viewBox="0 0 16 16"><g shape-rendering="crispEdges"><rect x="0.5" y="0.5" width="10" height="14" fill="#fff" stroke="#808080"/><rect x="2" y="3" width="6" height="1" fill="#000"/><rect x="2" y="5" width="4" height="1" fill="#000"/><rect x="2" y="7" width="6" height="1" fill="#000"/><rect x="2" y="9" width="4" height="1" fill="#000"/><rect x="2" y="11" width="5" height="1" fill="#000"/><rect x="13" y="1" width="1" height="14" fill="#a00010"/><rect x="11" y="14" width="5" height="1" fill="#a00010"/></g><path d="M11 10.5 H16 L13.5 13.5 Z" fill="#a00010"/></svg><svg class="ic" style="left:696px;top:81px" viewBox="0 0 16 16"><g shape-rendering="crispEdges"><rect x="0.5" y="0.5" width="10" height="14" fill="#fff" stroke="#808080"/><rect x="2" y="3" width="6" height="1" fill="#000"/><rect x="2" y="5" width="4" height="1" fill="#000"/><rect x="2" y="7" width="6" height="1" fill="#000"/><rect x="2" y="9" width="4" height="1" fill="#000"/><rect x="2" y="11" width="5" height="1" fill="#000"/><rect x="13" y="5" width="1" height="9" fill="#a00010"/></g><path d="M11 10 H16 L13.5 13.5 Z" fill="#a00010"/><path d="M13.5 0.7 L15.8 3 L13.5 5.3 L11.2 3 Z" fill="#fff" stroke="#2040ff"/></svg><svg class="ic" style="left:718px;top:81px" viewBox="0 0 16 16"><g shape-rendering="crispEdges"><rect x="0.5" y="0.5" width="10" height="14" fill="#fff" stroke="#808080"/><rect x="2" y="3" width="6" height="1" fill="#000"/><rect x="2" y="5" width="4" height="1" fill="#000"/><rect x="2" y="7" width="6" height="1" fill="#000"/><rect x="2" y="9" width="4" height="1" fill="#000"/><rect x="2" y="11" width="5" height="1" fill="#000"/><rect x="13" y="1" width="1" height="13" fill="#a00010"/></g><path d="M11 7 H16 L13.5 10 Z M11 11 H16 L13.5 14.5 Z" fill="#a00010"/></svg><svg class="ic" style="left:740px;top:81px" viewBox="0 0 16 16"><g shape-rendering="crispEdges"><rect x="0.5" y="0.5" width="10" height="14" fill="#fff" stroke="#808080"/><rect x="2" y="3" width="6" height="1" fill="#000"/><rect x="2" y="5" width="4" height="1" fill="#000"/><rect x="2" y="7" width="6" height="1" fill="#000"/><rect x="2" y="9" width="4" height="1" fill="#000"/><rect x="2" y="11" width="5" height="1" fill="#000"/></g><path d="M5.5 0.5 L14 8 M14.5 0.5 L5 8.5" stroke="#0000a0" stroke-width="1.8"/><path d="M13.5 6 V14 M11 14.5 H16.5 M11.3 10.5 L13.5 13 L15.7 10.5" stroke="#c00020" stroke-width="1.1" fill="none"/></svg><div class="sep" style="left:764px;top:82px;"></div><svg class="ic" style="left:773px;top:81px" viewBox="0 0 16 16"><text x="1.2" y="13" font-family="Liberation Sans,sans-serif" font-weight="bold" font-size="11" fill="#000">{</text><text x="9.6" y="13" font-family="Liberation Sans,sans-serif" font-weight="bold" font-size="11" fill="#000">}</text><path d="M0 0.6 H5 Q8.5 0.6 8.5 4 V7" fill="none" stroke="#a00010" stroke-width="1.2"/><path d="M5.8 6 H11.2 L8.5 9.2 Z" fill="#a00010"/></svg><svg class="ic" style="left:795px;top:81px" viewBox="0 0 16 16"><text x="1.5" y="13" font-family="Liberation Sans,sans-serif" font-weight="bold" font-size="11" fill="#000">{</text><text x="6.2" y="13" font-family="Liberation Sans,sans-serif" font-weight="bold" font-size="11" fill="#000">}</text><path d="M0 0.6 H10 Q13.5 0.6 13.5 4 V6" fill="none" stroke="#a00010" stroke-width="1.2"/><path d="M10.8 5 H16.2 L13.5 8.2 Z" fill="#a00010"/></svg><svg class="ic" style="left:817px;top:81px" viewBox="0 0 16 16"><text x="0" y="14" font-family="Liberation Sans,sans-serif" font-weight="bold" font-size="11" fill="#000">{</text><text x="4.4" y="14" font-family="Liberation Sans,sans-serif" font-weight="bold" font-size="11" fill="#000">}</text><path d="M4.5 5.5 V4.5 Q4.5 0.8 8.5 0.8 Q12.5 0.8 12.5 4.5 V6" fill="none" stroke="#a00010" stroke-width="1.2"/><path d="M9.8 5.5 H15.2 L12.5 8.8 Z" fill="#a00010"/></svg><svg class="ic" style="left:839px;top:81px" viewBox="0 0 16 16"><path d="M3 6.5 L4.5 4.5 H11.5 L13 6.5 L15.5 8 V11.5 L13 12.5 L11.5 15.5 H4.5 L3 12.5 L0.5 11.5 V8 Z" fill="#c0c0c8"/><text x="2.6" y="13.6" font-family="Liberation Sans,sans-serif" font-weight="bold" font-size="11" fill="#000">{</text><text x="8.6" y="13.6" font-family="Liberation Sans,sans-serif" font-weight="bold" font-size="11" fill="#000">}</text><path d="M0 0.6 H4.5 Q8 0.6 8 4 V7" fill="none" stroke="#0000a0" stroke-width="1.3"/><path d="M5.3 6 H10.7 L8 9.6 Z" fill="#0000a0"/></svg><div class="raised" style="left:861px;top:79px;width:20px;height:20px;"><svg class="ic" style="left:2px;top:2px" viewBox="0 0 16 16"><g shape-rendering="crispEdges"><path d="M1 0 H6 V1 H7 V4 H6 V5 H1 V4 H0 V1 H1 Z" fill="url(#pbk)"/><path d="M2 16 V12 L5 9 H9 L12 8 H16 V16 Z" fill="url(#pbk)"/><path d="M8 1 H10 V3 H11 V9 H9 V6 H8 Z" fill="url(#pcb)"/><path d="M11 2 H14 V10 H11 Z" fill="url(#pbl)"/><rect x="5" y="11" width="1" height="1" fill="#30e030"/><rect x="6" y="10" width="1" height="1" fill="#30e030"/><rect x="7" y="9" width="1" height="1" fill="#30e030"/></g></svg></div><div class="raised" style="left:887px;top:79px;width:20px;height:20px;"><svg class="ic" style="left:2px;top:2px" viewBox="0 0 16 16"><g shape-rendering="crispEdges"><path d="M1 0 H4 V1 H5 V0 H8 V1 H9 V5 H7 V3 H6 V5 H4 V3 H3 V5 H1 V4 H0 V1 H1 Z" fill="url(#pbk)"/><path d="M3 16 V12 L6 9 H10 L12 8 H16 V16 Z" fill="url(#pbk)"/><path d="M10 2 H12 V9 H10 V7 H9 V5 H10 Z" fill="url(#pcb)"/><path d="M12 3 H15 V10 H12 Z" fill="url(#pbl)"/><rect x="6" y="11" width="1" height="1" fill="#30e030"/><rect x="7" y="10" width="1" height="1" fill="#30e030"/><rect x="8" y="9" width="1" height="1" fill="#30e030"/></g></svg></div><svg class="ic" style="left:912px;top:81px" viewBox="0 0 16 16"><ellipse cx="9" cy="13.2" rx="3.4" ry="2.8" fill="#7fa6e8" transform="rotate(-35 9 13.2)"/><ellipse cx="13.2" cy="8.3" rx="2" ry="2.3" fill="#c8c8cc"/><path d="M5.5 9.5 V3 H13.5 V9 L12.5 12.5 L9 11 L6.5 13.2 L1 7.8 Q0.4 6.6 1.6 6.3 Q2.4 6.2 3.2 7 Z" fill="#fff"/><path d="M5.5 9.5 L3.2 7 Q2.4 6.2 1.6 6.3 Q0.4 6.6 1 7.8 L6.5 13.4" fill="none" stroke="#000" stroke-width="1.1"/><path d="M13.5 9 L12.6 12.6 L11.2 13.2" fill="none" stroke="#000" stroke-width="1.1"/><g shape-rendering="crispEdges"><rect x="6" y="2" width="1" height="7" fill="#fff"/><rect x="8" y="1" width="1" height="8" fill="#fff"/><rect x="10" y="1" width="1" height="8" fill="#fff"/><rect x="12" y="3" width="1" height="6" fill="#fff"/><rect x="5" y="2" width="1" height="8" fill="#000"/><rect x="6" y="1" width="1" height="1" fill="#000"/><rect x="7" y="1" width="1" height="8" fill="#000"/><rect x="8" y="0" width="1" height="1" fill="#000"/><rect x="9" y="1" width="1" height="8" fill="#000"/><rect x="10" y="0" width="1" height="1" fill="#000"/><rect x="11" y="1" width="1" height="8" fill="#000"/><rect x="12" y="2" width="1" height="1" fill="#000"/><rect x="13" y="3" width="1" height="7" fill="#000"/></g></svg><div class="a" style="left:27px;top:111px;width:20px;height:19px;box-sizing:border-box;background:#fff;border-top:1px solid #000;border-left:1px solid #000;"><svg class="ic" style="left:6px;top:4px" viewBox="0 0 16 16"><path d="M0 0 V11 L2.6 8.6 L5 13 L7.4 12 L5.2 7.6 H8.6 Z" fill="#000"/></svg></div><div class="raised" style="left:53px;top:111px;width:20px;height:20px;"><svg class="ic" style="left:3px;top:3px" viewBox="0 0 16 16"><g shape-rendering="crispEdges"><rect x="0" y="0" width="9" height="1" fill="#000"/><rect x="0" y="0" width="1" height="7" fill="#000"/><rect x="1" y="1" width="7" height="1" fill="#404040"/><rect x="1" y="1" width="1" height="5" fill="#404040"/><rect x="4.5" y="4.5" width="6" height="6" fill="none" stroke="#000" stroke-width="3"/><rect x="13" y="6" width="1" height="8" fill="#000"/><rect x="8" y="13" width="6" height="1" fill="#000"/><rect x="12" y="7" width="1" height="6" fill="#404040"/><rect x="9" y="12" width="4" height="1" fill="#404040"/></g><path d="M9 9 L13 13" stroke="#000" stroke-width="2"/></svg></div><div class="raised" style="left:79px;top:111px;width:20px;height:20px;"><svg class="ic" style="left:1px;top:1px" viewBox="0 0 16 16"><g shape-rendering="crispEdges"><rect x="8" y="0" width="1" height="1" fill="#000"/><rect x="7" y="1" width="1" height="1" fill="#000"/><rect x="9" y="1" width="1" height="1" fill="#000"/><rect x="6" y="2" width="1" height="1" fill="#000"/><rect x="10" y="2" width="1" height="1" fill="#000"/><rect x="7" y="3" width="1" height="1" fill="#000"/><rect x="9" y="3" width="1" height="1" fill="#000"/><rect x="8" y="4" width="1" height="1" fill="#000"/><rect x="8" y="2" width="1" height="1" fill="#000"/><rect x="8" y="11" width="1" height="1" fill="#000"/><rect x="7" y="12" width="1" height="1" fill="#000"/><rect x="9" y="12" width="1" height="1" fill="#000"/><rect x="6" y="13" width="1" height="1" fill="#000"/><rect x="10" y="13" width="1" height="1" fill="#000"/><rect x="7" y="14" width="1" height="1" fill="#000"/><rect x="9" y="14" width="1" height="1" fill="#000"/><rect x="8" y="15" width="1" height="1" fill="#000"/><rect x="8" y="13" width="1" height="1" fill="#000"/><rect x="2" y="6" width="1" height="1" fill="#000"/><rect x="1" y="7" width="1" height="1" fill="#000"/><rect x="3" y="7" width="1" height="1" fill="#000"/><rect x="0" y="8" width="1" height="1" fill="#000"/><rect x="4" y="8" width="1" height="1" fill="#000"/><rect x="1" y="9" width="1" height="1" fill="#000"/><rect x="3" y="9" width="1" height="1" fill="#000"/><rect x="2" y="10" width="1" height="1" fill="#000"/><rect x="2" y="8" width="1" height="1" fill="#000"/><rect x="13" y="6" width="1" height="1" fill="#000"/><rect x="12" y="7" width="1" height="1" fill="#000"/><rect x="14" y="7" width="1" height="1" fill="#000"/><rect x="11" y="8" width="1" height="1" fill="#000"/><rect x="15" y="8" width="1" height="1" fill="#000"/><rect x="12" y="9" width="1" height="1" fill="#000"/><rect x="14" y="9" width="1" height="1" fill="#000"/><rect x="13" y="10" width="1" height="1" fill="#000"/><rect x="13" y="8" width="1" height="1" fill="#000"/><rect x="8" y="5" width="1" height="1" fill="#000"/><rect x="8" y="7" width="1" height="1" fill="#000"/><rect x="8" y="9" width="1" height="1" fill="#000"/><rect x="8" y="11" width="1" height="1" fill="#000"/><rect x="5" y="8" width="1" height="1" fill="#000"/><rect x="7" y="8" width="1" height="1" fill="#000"/><rect x="9" y="8" width="1" height="1" fill="#000"/><rect x="11" y="8" width="1" height="1" fill="#000"/><rect x="8" y="8" width="1" height="1" fill="#000"/><rect x="6" y="8" width="1" height="1" fill="#000"/><rect x="10" y="8" width="1" height="1" fill="#000"/><rect x="8" y="6" width="1" height="1" fill="#000"/><rect x="8" y="10" width="1" height="1" fill="#000"/></g></svg></div><div class="raised" style="left:105px;top:111px;width:20px;height:20px;"><svg class="ic" style="left:1px;top:2px" viewBox="0 0 16 16"><g shape-rendering="crispEdges"><rect x="3" y="1" width="1" height="1" fill="#000"/><rect x="5" y="1" width="1" height="1" fill="#000"/><rect x="7" y="1" width="1" height="1" fill="#000"/><rect x="8" y="3" width="1" height="1" fill="#000"/><rect x="8" y="5" width="1" height="1" fill="#000"/><rect x="8" y="7" width="1" height="1" fill="#000"/><rect x="8" y="9" width="1" height="1" fill="#000"/><rect x="8" y="11" width="1" height="1" fill="#000"/><rect x="8" y="13" width="1" height="1" fill="#000"/><rect x="10" y="13" width="1" height="1" fill="#000"/><rect x="12" y="13" width="1" height="1" fill="#000"/><rect x="14" y="13" width="1" height="1" fill="#000"/><rect x="15" y="13" width="1" height="1" fill="#000"/><rect x="4" y="1" width="1" height="1" fill="#000"/><rect x="13" y="4" width="1" height="1" fill="#000"/><rect x="3" y="10" width="1" height="1" fill="#000"/><rect x="5" y="10" width="1" height="1" fill="#000"/><rect x="4" y="5" width="1" height="1" fill="#000"/><rect x="3" y="6" width="1" height="1" fill="#000"/><rect x="5" y="6" width="1" height="1" fill="#000"/><rect x="4" y="7" width="1" height="1" fill="#000"/><rect x="4" y="6" width="1" height="1" fill="#000"/><rect x="14" y="8" width="1" height="1" fill="#000"/><rect x="13" y="9" width="1" height="1" fill="#000"/><rect x="15" y="9" width="1" height="1" fill="#000"/><rect x="14" y="10" width="1" height="1" fill="#000"/><rect x="14" y="9" width="1" height="1" fill="#000"/></g></svg></div><div class="sep" style="left:133px;top:114px;"></div><svg class="ic" style="left:142px;top:113px" viewBox="0 0 16 16"><g shape-rendering="crispEdges"><rect x="0" y="0" width="8" height="16" fill="#000"/></g><circle cx="4" cy="3" r="2.8" fill="#0000ff"/><circle cx="4" cy="8.2" r="2" fill="#30d8e0"/><circle cx="4" cy="13" r="2" fill="#20d020"/><rect x="3" y="7" width="1" height="1" fill="#fff"/><rect x="5" y="9" width="1" height="1" fill="#fff"/><rect x="3" y="12" width="1" height="1" fill="#b0f0b0"/><rect x="5" y="14" width="1" height="1" fill="#b0f0b0"/><path d="M10.5 4.5 V12.5 L15.2 8.5 Z" fill="#fff" stroke="#000" stroke-width="1"/><rect x="8" y="6" width="2" height="1" fill="#f0a830"/><rect x="8" y="11" width="2" height="1" fill="#f0a830"/></svg><svg class="ic" style="left:182px;top:111px" viewBox="0 0 16 16"><g shape-rendering="crispEdges"><rect x="5" y="0" width="2" height="12" fill="#00c8ff"/><rect x="7" y="1" width="1" height="11" fill="#0090d0"/><rect x="0" y="11" width="12" height="1" fill="#00c8ff"/><rect x="0" y="11" width="1" height="4" fill="#00c8ff"/><rect x="1" y="12" width="10" height="2" fill="#e8f8ff"/><rect x="1" y="14" width="11" height="1" fill="#00c8ff"/><rect x="11" y="11" width="1" height="4" fill="#0080c0"/><rect x="2" y="15" width="11" height="1" fill="#101820"/><rect x="12" y="12" width="1" height="4" fill="#101820"/></g><path d="M9.5 4.2 H15.5 M12.5 1.2 V7.2" stroke="#003078" stroke-width="1.4"/><g></g></svg><svg class="ic" style="left:204px;top:111px" viewBox="0 0 16 16"><g shape-rendering="crispEdges"><rect x="5" y="0" width="2" height="12" fill="#00c8ff"/><rect x="7" y="1" width="1" height="11" fill="#0090d0"/><rect x="0" y="11" width="12" height="1" fill="#00c8ff"/><rect x="0" y="11" width="1" height="4" fill="#00c8ff"/><rect x="1" y="12" width="10" height="2" fill="#e8f8ff"/><rect x="1" y="14" width="11" height="1" fill="#00c8ff"/><rect x="11" y="11" width="1" height="4" fill="#0080c0"/><rect x="2" y="15" width="11" height="1" fill="#101820"/><rect x="12" y="12" width="1" height="4" fill="#101820"/></g><path d="M8 3.8 H15" stroke="#00b8f0" stroke-width="1.5"/><g></g></svg><svg class="ic" style="left:226px;top:111px" viewBox="0 0 16 16"><path d="M0 1.5 H5.5 V14.5 H16" fill="none" stroke="#0a8a0a" stroke-width="1" shape-rendering="crispEdges"/><path d="M7 7.5 L11.5 3.5 V6 H16 V9 H11.5 V11.5 Z" fill="#d8004c"/></svg><svg class="ic" style="left:248px;top:111px" viewBox="0 0 16 16"><path d="M0 14.5 H10.5 V1.5 H16" fill="none" stroke="#0a8a0a" stroke-width="1" shape-rendering="crispEdges"/><path d="M9.5 7.5 L5 3.5 V6 H0.5 V9 H5 V11.5 Z" fill="#d8004c"/></svg><svg class="ic" style="left:270px;top:111px" viewBox="0 0 16 16"><path d="M0 1.5 H5.5 V14.5 H16" fill="none" stroke="#0a8a0a" stroke-width="1" shape-rendering="crispEdges"/><path d="M5.5 9.5 L2.7 6.5 H8.3 Z" fill="#d8004c"/><path d="M6.5 11 L10 8.2 V13.8 Z" fill="#d8004c"/><path d="M9.5 11 H14" stroke="#d8004c" stroke-width="1.2"/></svg><svg class="ic" style="left:292px;top:111px" viewBox="0 0 16 16"><path d="M0 1.5 H8.5 V14.5 H16" fill="none" stroke="#0a8a0a" stroke-width="1" shape-rendering="crispEdges"/><path d="M8.5 9.5 L5.7 6.5 H11.3 Z" fill="#d8004c"/><path d="M8 11 L4.5 8.2 V13.8 Z" fill="#d8004c"/><path d="M5 11 H0.5" stroke="#d8004c" stroke-width="1.2"/></svg><svg class="ic" style="left:314px;top:111px" viewBox="0 0 16 16"><path d="M0 14.5 H6.5 V1.5 H16" fill="none" stroke="#0a8a0a" stroke-width="1" shape-rendering="crispEdges"/><path d="M6.5 3.5 L3.7 6.5 H9.3 Z" fill="#d8004c"/><path d="M7.5 11 L11 8.2 V13.8 Z" fill="#d8004c"/><path d="M10.5 11 H15" stroke="#d8004c" stroke-width="1.2"/></svg><svg class="ic" style="left:336px;top:111px" viewBox="0 0 16 16"><path d="M0 14.5 H10.5 V1.5 H16" fill="none" stroke="#0a8a0a" stroke-width="1" shape-rendering="crispEdges"/><path d="M10.5 4 L7.7 7 H13.3 Z" fill="#d8004c"/><path d="M10 11 L6.5 8.2 V13.8 Z" fill="#d8004c"/><path d="M7 11 H2.5" stroke="#d8004c" stroke-width="1.2"/></svg><svg class="ic" style="left:375.5px;top:112px" viewBox="0 0 16 16"><path d="M1.2 2.8 C3.5 0.5 5.5 3.2 8 1.8 C10 0.6 11.5 1 12.5 1.6 L12 8.6 C10 7.6 8.5 8.2 7 9.2 C4.5 10.8 2.5 8.2 0.3 10 Z" fill="#9cd0fa" stroke="#2a86e6" stroke-width="1"/><path d="M3 4 C5 3 6 5 8.5 3.5" stroke="#d8eefc" stroke-width="1.4" fill="none"/><path d="M13.7 0.3 L11.8 14.5" stroke="#b4702c" stroke-width="1.7" stroke-linecap="round"/><path d="M14.2 0.8 L12.6 13" stroke="#e0a868" stroke-width="0.6"/><circle cx="12" cy="11.8" r="3.7" fill="#3f9c34"/><circle cx="12" cy="11.8" r="2.9" fill="#6cc05c"/><path d="M9.9 11.8 H14.1 M12 9.7 V13.9" stroke="#fff" stroke-width="1.4"/></svg><svg class="a" style="left:394px;top:119px" width="6" height="3" viewBox="0 0 6 3"><path d="M0 0 H5.6 L2.8 3 Z" fill="#000"/></svg><svg class="ic" style="left:405px;top:112px" viewBox="0 0 16 16"><path d="M1.2 2.8 C3.5 0.5 5.5 3.2 8 1.8 C10 0.6 11.5 1 12.5 1.6 L12 8.6 C10 7.6 8.5 8.2 7 9.2 C4.5 10.8 2.5 8.2 0.3 10 Z" fill="#9cd0fa" stroke="#2a86e6" stroke-width="1"/><path d="M3 4 C5 3 6 5 8.5 3.5" stroke="#d8eefc" stroke-width="1.4" fill="none"/><path d="M13.7 0.3 L11.8 14.5" stroke="#b4702c" stroke-width="1.7" stroke-linecap="round"/><path d="M14.2 0.8 L12.6 13" stroke="#e0a868" stroke-width="0.6"/><circle cx="12" cy="11.8" r="3.7" fill="#d0540c"/><circle cx="12" cy="11.8" r="2.9" fill="#f07a28"/><path d="M9.9 11.8 H14.1" stroke="#fff" stroke-width="1.5"/></svg><svg class="ic" style="left:427.5px;top:112px" viewBox="0 0 16 16"><path d="M1.2 2.8 C3.5 0.5 5.5 3.2 8 1.8 C10 0.6 11.5 1 12.5 1.6 L12 8.6 C10 7.6 8.5 8.2 7 9.2 C4.5 10.8 2.5 8.2 0.3 10 Z" fill="#9cd0fa" stroke="#2a86e6" stroke-width="1"/><path d="M3 4 C5 3 6 5 8.5 3.5" stroke="#d8eefc" stroke-width="1.4" fill="none"/><path d="M13.7 0.3 L11.8 14.5" stroke="#b4702c" stroke-width="1.7" stroke-linecap="round"/><path d="M14.2 0.8 L12.6 13" stroke="#e0a868" stroke-width="0.6"/><path d="M4.5 14.8 L5.5 11.5 L13 3.5 L15.3 5.6 L7.8 13.8 Z" fill="#f4d468" stroke="#b07c28" stroke-width="0.9"/><path d="M4.5 14.8 L5.5 11.5 L7.8 13.8 Z" fill="#e8a060"/><path d="M13 3.5 L15.3 5.6" stroke="#e08080" stroke-width="1.6"/></svg><svg class="ic" style="left:449.5px;top:112px" viewBox="0 0 16 16"><path d="M1.2 2.8 C3.5 0.5 5.5 3.2 8 1.8 C10 0.6 11.5 1 12.5 1.6 L12 8.6 C10 7.6 8.5 8.2 7 9.2 C4.5 10.8 2.5 8.2 0.3 10 Z" fill="#9cd0fa" stroke="#2a86e6" stroke-width="1"/><path d="M3 4 C5 3 6 5 8.5 3.5" stroke="#d8eefc" stroke-width="1.4" fill="none"/><path d="M13.7 0.3 L11.8 14.5" stroke="#b4702c" stroke-width="1.7" stroke-linecap="round"/><path d="M14.2 0.8 L12.6 13" stroke="#e0a868" stroke-width="0.6"/><path d="M6 9.5 H11 V6.8 L16 11.2 L11 15.6 V13 H6 Z" fill="#4ea83c" stroke="#2c7c1c" stroke-width="0.8"/><path d="M7 10.5 H11.5 V9 L14 11" stroke="#90d880" stroke-width="0.9" fill="none"/></svg><svg class="ic" style="left:488.5px;top:111.5px" viewBox="0 0 16 16"><path d="M0 1 H3 Q5.5 1 6 4 Q6.5 7 8 7.5 Q6.5 8 6 11 Q5.5 14 3 14 H0" fill="none" stroke="#000" stroke-width="1.7"/><path d="M0 7.5 H5" stroke="#000" stroke-width="1.7"/><path d="M7.5 7.5 L12 3.5 V6 H16 V9 H12 V11.5 Z" fill="#ff2000"/><path d="M7.5 7.5 L12 3.5 V6 H16 V7.5 Z" fill="#ff8c00"/></svg><div class="sep" style="left:513px;top:112px;"></div><svg class="ic" style="left:523px;top:111.5px" viewBox="0 0 16 16"><g shape-rendering="crispEdges"><rect x="0" y="5" width="1" height="1" fill="#000"/><rect x="1" y="4" width="1" height="1" fill="#000"/><rect x="2" y="3" width="1" height="1" fill="#000"/><rect x="3" y="2" width="1" height="1" fill="#000"/><rect x="4" y="1" width="1" height="1" fill="#000"/><rect x="5" y="0" width="1" height="1" fill="#000"/><rect x="1" y="5" width="1" height="1" fill="#f0e020"/><rect x="2" y="4" width="1" height="1" fill="#f0e020"/><rect x="3" y="3" width="1" height="1" fill="#f0e020"/><rect x="4" y="2" width="1" height="1" fill="#f0e020"/><rect x="5" y="1" width="1" height="1" fill="#f0e020"/><rect x="6" y="0" width="1" height="1" fill="#f0e020"/><rect x="2" y="5" width="1" height="1" fill="#f0e020"/><rect x="3" y="4" width="1" height="1" fill="#f0e020"/><rect x="4" y="3" width="1" height="1" fill="#f0e020"/><rect x="5" y="2" width="1" height="1" fill="#f0e020"/><rect x="6" y="1" width="1" height="1" fill="#f0e020"/><rect x="7" y="0" width="1" height="1" fill="#f0e020"/><rect x="4" y="5" width="1" height="1" fill="#000"/><rect x="5" y="4" width="1" height="1" fill="#000"/><rect x="6" y="3" width="1" height="1" fill="#000"/><rect x="7" y="2" width="1" height="1" fill="#000"/><rect x="8" y="1" width="1" height="1" fill="#000"/><rect x="9" y="0" width="1" height="1" fill="#000"/><rect x="5" y="5" width="1" height="1" fill="#f0e020"/><rect x="6" y="4" width="1" height="1" fill="#f0e020"/><rect x="7" y="3" width="1" height="1" fill="#f0e020"/><rect x="8" y="2" width="1" height="1" fill="#f0e020"/><rect x="9" y="1" width="1" height="1" fill="#f0e020"/><rect x="10" y="0" width="1" height="1" fill="#f0e020"/><rect x="6" y="5" width="1" height="1" fill="#f0e020"/><rect x="7" y="4" width="1" height="1" fill="#f0e020"/><rect x="8" y="3" width="1" height="1" fill="#f0e020"/><rect x="9" y="2" width="1" height="1" fill="#f0e020"/><rect x="10" y="1" width="1" height="1" fill="#f0e020"/><rect x="11" y="0" width="1" height="1" fill="#f0e020"/><rect x="8" y="5" width="1" height="1" fill="#000"/><rect x="9" y="4" width="1" height="1" fill="#000"/><rect x="10" y="3" width="1" height="1" fill="#000"/><rect x="11" y="2" width="1" height="1" fill="#000"/><rect x="12" y="1" width="1" height="1" fill="#000"/><rect x="13" y="0" width="1" height="1" fill="#000"/><rect x="9" y="5" width="1" height="1" fill="#f0e020"/><rect x="10" y="4" width="1" height="1" fill="#f0e020"/><rect x="11" y="3" width="1" height="1" fill="#f0e020"/><rect x="12" y="2" width="1" height="1" fill="#f0e020"/><rect x="13" y="1" width="1" height="1" fill="#f0e020"/><rect x="14" y="0" width="1" height="1" fill="#f0e020"/><rect x="10" y="5" width="1" height="1" fill="#f0e020"/><rect x="11" y="4" width="1" height="1" fill="#f0e020"/><rect x="12" y="3" width="1" height="1" fill="#f0e020"/><rect x="13" y="2" width="1" height="1" fill="#f0e020"/><rect x="14" y="1" width="1" height="1" fill="#f0e020"/><rect x="15" y="0" width="1" height="1" fill="#f0e020"/><rect x="12" y="5" width="1" height="1" fill="#000"/><rect x="13" y="4" width="1" height="1" fill="#000"/><rect x="14" y="3" width="1" height="1" fill="#000"/><rect x="15" y="2" width="1" height="1" fill="#000"/><rect x="13" y="5" width="1" height="1" fill="#f0e020"/><rect x="14" y="4" width="1" height="1" fill="#f0e020"/><rect x="15" y="3" width="1" height="1" fill="#f0e020"/><rect x="1" y="8" width="1" height="1" fill="#900000"/><rect x="2" y="7" width="1" height="1" fill="#900000"/><rect x="3" y="8" width="1" height="1" fill="#900000"/><rect x="1" y="10" width="1" height="1" fill="#900000"/><rect x="5" y="8" width="1" height="1" fill="#900000"/><rect x="6" y="9" width="1" height="1" fill="#900000"/><rect x="7" y="8" width="1" height="1" fill="#900000"/><rect x="4" y="11" width="1" height="1" fill="#900000"/><rect x="5" y="12" width="1" height="1" fill="#900000"/><rect x="4" y="13" width="1" height="1" fill="#900000"/><rect x="6" y="11" width="1" height="1" fill="#900000"/><rect x="3" y="13" width="1" height="1" fill="#900000"/><rect x="5" y="14" width="1" height="1" fill="#900000"/><rect x="3" y="9" width="1" height="1" fill="#000"/><rect x="5" y="10" width="1" height="1" fill="#000"/><rect x="10" y="8" width="4" height="8" fill="url(#pcb)"/><rect x="14" y="8" width="1" height="1" fill="#900000"/><rect x="14" y="10" width="1" height="1" fill="#900000"/><rect x="14" y="12" width="1" height="1" fill="#900000"/><rect x="14" y="14" width="1" height="1" fill="#900000"/><rect x="12" y="9" width="1" height="1" fill="#900000"/><rect x="12" y="11" width="1" height="1" fill="#900000"/><rect x="12" y="13" width="1" height="1" fill="#900000"/><rect x="9" y="9" width="1" height="1" fill="#900000"/><rect x="9" y="11" width="1" height="1" fill="#900000"/><rect x="9" y="13" width="1" height="1" fill="#900000"/></g></svg><svg class="ic" style="left:562.5px;top:111px" viewBox="0 0 16 16"><path d="M9.5 9.5 L14.8 14.8" stroke="#c00020" stroke-width="3" stroke-linecap="round"/><path d="M10.8 9.8 L15 14" stroke="#fff" stroke-width="0.9"/><circle cx="6" cy="6" r="5" fill="#fff" stroke="#000" stroke-width="1.15"/><path d="M3 6 H9 M6 3 V9" stroke="#000" stroke-width="1.5"/></svg><svg class="ic" style="left:584.5px;top:111px" viewBox="0 0 16 16"><path d="M9.5 9.5 L14.8 14.8" stroke="#c00020" stroke-width="3" stroke-linecap="round"/><path d="M10.8 9.8 L15 14" stroke="#fff" stroke-width="0.9"/><circle cx="6" cy="6" r="5" fill="#fff" stroke="#000" stroke-width="1.15"/><path d="M3 6 H9" stroke="#000" stroke-width="1.5"/></svg><svg class="ic" style="left:607px;top:111px" viewBox="0 0 16 16"><path d="M9.5 9.5 L14.8 14.8" stroke="#c00020" stroke-width="3" stroke-linecap="round"/><path d="M10.8 9.8 L15 14" stroke="#fff" stroke-width="0.9"/><circle cx="6" cy="6" r="5" fill="#6a3000" stroke="#000" stroke-width="1.15"/><path d="M2.8 5.5 Q3 3 5.5 2.8" stroke="#d09060" stroke-width="1.2" fill="none"/></svg><svg class="ic" style="left:628px;top:111px" viewBox="0 0 16 16"><rect x="0.5" y="12.5" width="10" height="3" fill="#fff" stroke="#f0e000"/><path d="M9.5 9.5 L14.8 14.8" stroke="#c00020" stroke-width="3" stroke-linecap="round"/><path d="M10.8 9.8 L15 14" stroke="#fff" stroke-width="0.9"/><circle cx="6" cy="6" r="5" fill="#fff" stroke="#000" stroke-width="1.15"/><rect x="4" y="1" width="1" height="10" fill="#f0e000"/><path d="M3.5 6 H9.5 M6.5 3 V9" stroke="#000" stroke-width="1.5"/></svg><svg class="ic" style="left:650px;top:111px" viewBox="0 0 16 16"><g shape-rendering="crispEdges"><rect x="1" y="1" width="8" height="7" fill="#fff" stroke="#a00020" stroke-width="2"/><rect x="4" y="5" width="8" height="7" fill="#fff" stroke="#a00020" stroke-width="2"/></g><path d="M12.5 12 L15.5 15" stroke="#f00020" stroke-width="2.4"/><circle cx="10.5" cy="9.5" r="3.2" fill="#c4c4c4" stroke="#202020" stroke-width="1.1"/></svg><div class="a" style="left:690px;top:111px;width:20px;height:19px;box-sizing:border-box;background:#fff;border-top:1px solid #000;border-left:1px solid #000;"><svg class="a" style="left:0px;top:0px;overflow:visible" width="18" height="18" viewBox="0 0 18 18"><g shape-rendering="crispEdges"><rect x="9" y="3" width="1" height="14" fill="#1c8c1c"/><rect x="2" y="16" width="16" height="1" fill="#1c8c1c"/></g></svg></div><div class="raised" style="left:716px;top:111px;width:20px;height:20px;"><svg class="a" style="left:0px;top:0px;overflow:visible" width="18" height="18" viewBox="0 0 18 18"><g shape-rendering="crispEdges"><rect x="5" y="1" width="8" height="16" fill="#701818"/><path d="M1.5 15.5 H7.5 V2.5 H10.5 V15.5 H17" stroke="#1c8c1c" fill="none"/></g></svg></div><div class="raised" style="left:742px;top:111px;width:20px;height:20px;"><svg class="a" style="left:0px;top:0px;overflow:visible" width="18" height="18" viewBox="0 0 18 18"><g shape-rendering="crispEdges"><rect x="2" y="1" width="14" height="15" fill="#0a5a0a"/><path d="M1 15.5 H4.5 V2.5 H7.5 V15.5 H10.5 V2.5 H13.5 V15.5 H17" stroke="#2f962f" fill="none"/></g></svg></div><div class="sep" style="left:770px;top:114px;"></div><svg class="ic" style="left:779px;top:113px" viewBox="0 0 16 16"><g shape-rendering="crispEdges"><rect x="0" y="0" width="16" height="16" fill="url(#prd)"/><rect x="1" y="14" width="1" height="1" fill="#30b030"/><rect x="3" y="14" width="1" height="1" fill="#30b030"/><rect x="5" y="14" width="1" height="1" fill="#30b030"/><rect x="7" y="14" width="1" height="1" fill="#30b030"/><rect x="7" y="12" width="1" height="1" fill="#30b030"/><rect x="7" y="10" width="1" height="1" fill="#30b030"/><rect x="7" y="8" width="1" height="1" fill="#30b030"/><rect x="7" y="6" width="1" height="1" fill="#30b030"/><rect x="7" y="4" width="1" height="1" fill="#30b030"/><rect x="7" y="2" width="1" height="1" fill="#30b030"/><rect x="9" y="1" width="1" height="1" fill="#30b030"/><rect x="11" y="1" width="1" height="1" fill="#30b030"/><rect x="13" y="1" width="1" height="1" fill="#30b030"/><rect x="15" y="1" width="1" height="1" fill="#30b030"/><rect x="7" y="1" width="1" height="1" fill="#30b030"/></g></svg><svg class="ic" style="left:802px;top:113px" viewBox="0 0 16 16"><g shape-rendering="crispEdges"><rect x="5" y="0" width="4" height="16" fill="url(#prd)"/><rect x="4" y="0" width="1" height="1" fill="#00e8f0"/><rect x="4" y="2" width="1" height="1" fill="#00e8f0"/><rect x="4" y="4" width="1" height="1" fill="#00e8f0"/><rect x="4" y="6" width="1" height="1" fill="#00e8f0"/><rect x="4" y="8" width="1" height="1" fill="#00e8f0"/><rect x="4" y="10" width="1" height="1" fill="#00e8f0"/><rect x="4" y="12" width="1" height="1" fill="#00e8f0"/><rect x="4" y="14" width="1" height="1" fill="#00e8f0"/><rect x="0" y="14" width="1" height="1" fill="#1c8c1c"/><rect x="2" y="14" width="1" height="1" fill="#1c8c1c"/><rect x="4" y="14" width="1" height="1" fill="#1c8c1c"/><rect x="6" y="13" width="1" height="1" fill="#1c8c1c"/><rect x="6" y="11" width="1" height="1" fill="#1c8c1c"/><rect x="6" y="9" width="1" height="1" fill="#1c8c1c"/><rect x="6" y="7" width="1" height="1" fill="#1c8c1c"/><rect x="6" y="5" width="1" height="1" fill="#1c8c1c"/><rect x="6" y="3" width="1" height="1" fill="#1c8c1c"/><rect x="7" y="1" width="1" height="1" fill="#1c8c1c"/><rect x="9" y="1" width="1" height="1" fill="#1c8c1c"/><rect x="11" y="1" width="1" height="1" fill="#1c8c1c"/><rect x="13" y="1" width="1" height="1" fill="#1c8c1c"/></g></svg><svg class="ic" style="left:824px;top:113px" viewBox="0 0 16 16"><g shape-rendering="crispEdges"><rect x="0" y="14" width="1" height="1" fill="#1c8c1c"/><rect x="2" y="14" width="1" height="1" fill="#1c8c1c"/><rect x="4" y="14" width="1" height="1" fill="#1c8c1c"/><rect x="6" y="14" width="1" height="1" fill="#1c8c1c"/><rect x="7" y="13" width="1" height="1" fill="#1c8c1c"/><rect x="7" y="11" width="1" height="1" fill="#1c8c1c"/><rect x="7" y="9" width="1" height="1" fill="#1c8c1c"/><rect x="7" y="7" width="1" height="1" fill="#1c8c1c"/><rect x="7" y="5" width="1" height="1" fill="#1c8c1c"/><rect x="7" y="3" width="1" height="1" fill="#1c8c1c"/><rect x="7" y="1" width="1" height="1" fill="#1c8c1c"/><rect x="9" y="1" width="1" height="1" fill="#1c8c1c"/><rect x="11" y="1" width="1" height="1" fill="#1c8c1c"/><rect x="13" y="1" width="1" height="1" fill="#1c8c1c"/></g></svg><svg class="ic" style="left:846px;top:113px" viewBox="0 0 16 16"><g shape-rendering="crispEdges"><rect x="0" y="14" width="1" height="1" fill="#1c8c1c"/><rect x="2" y="14" width="1" height="1" fill="#1c8c1c"/><rect x="4" y="14" width="1" height="1" fill="#1c8c1c"/><rect x="6" y="14" width="1" height="1" fill="#1c8c1c"/><rect x="8" y="1" width="1" height="1" fill="#1c8c1c"/><rect x="10" y="1" width="1" height="1" fill="#1c8c1c"/><rect x="12" y="1" width="1" height="1" fill="#1c8c1c"/><rect x="14" y="1" width="1" height="1" fill="#1c8c1c"/><rect x="6" y="0" width="1" height="1" fill="#00e8f0"/><rect x="6" y="2" width="1" height="1" fill="#00e8f0"/><rect x="6" y="4" width="1" height="1" fill="#00e8f0"/><rect x="6" y="6" width="1" height="1" fill="#00e8f0"/><rect x="6" y="8" width="1" height="1" fill="#00e8f0"/><rect x="6" y="10" width="1" height="1" fill="#00e8f0"/><rect x="6" y="12" width="1" height="1" fill="#00e8f0"/><rect x="6" y="14" width="1" height="1" fill="#00e8f0"/><rect x="7" y="13" width="1" height="1" fill="#00e8f0"/></g></svg>
<div class="a" style="left:11px;top:138px;width:930px;height:1px;background:#fff;"></div><div class="a" style="left:11px;top:139px;width:930px;height:1px;background:#f4f2e8;"></div><div class="a" style="left:13px;top:140px;width:926px;height:386px;box-sizing:border-box;border:1px solid;border-color:#716f64 #fff #fff #716f64;"></div><div class="a" style="left:14px;top:141px;width:275px;height:384px;background:#808080;"></div><div class="a" style="left:13px;top:160px;width:905px;height:2px;background:#fff;border-bottom:0;"></div><div class="a" style="left:14px;top:162px;width:8px;height:299px;background:#fff;"></div><div class="a" style="left:289px;top:141px;width:629px;height:19px;background:#000;"></div><div class="a" style="left:289px;top:162px;width:629px;height:299px;background:#000;"></div><div class="a" style="left:289px;top:464px;width:629px;height:40px;background:#000;"></div><div class="a" style="left:22px;top:436px;width:198px;height:17px;background:#fff;"></div><div class="a" style="left:223px;top:436px;width:63px;height:17px;background:#fff;"></div><div class="a" style="left:13px;top:461px;width:905px;height:1px;background:#aca899;"></div><div class="a" style="left:13px;top:462px;width:905px;height:2px;background:#fff;"></div><div class="a" style="left:62px;top:486px;width:158px;height:17px;background:#fff;"></div><div class="a" style="left:223px;top:486px;width:63px;height:17px;background:#fff;"></div><div class="a" style="left:13px;top:503px;width:905px;height:1px;background:#aca899;"></div><div class="a" style="left:13px;top:504px;width:905px;height:2px;background:#fff;"></div><div class="a" style="left:14px;top:506px;width:275px;height:1px;background:#808080;"></div><div class="a" style="left:220px;top:141px;width:1px;height:384px;background:#a09c8c;"></div><div class="a" style="left:221px;top:141px;width:2px;height:384px;background:#fff;"></div><div class="a" style="left:286px;top:141px;width:1px;height:384px;background:#a09c8c;"></div><div class="a" style="left:287px;top:141px;width:2px;height:384px;background:#fff;"></div><div class="a" style="left:918px;top:141px;width:1px;height:384px;background:#c8c4b4;"></div><div class="a" style="left:919px;top:141px;width:2px;height:384px;background:#fff;"></div><div class="a" style="left:921px;top:141px;width:17px;height:19px;background:#808080;"></div><div class="a" style="left:921px;top:464px;width:17px;height:40px;background:#808080;"></div><div class="a" style="left:921px;top:506px;width:17px;height:19px;background:#808080;"></div><div class="a" style="left:921px;top:160px;width:17px;height:2px;background:#fff;"></div><div class="a" style="left:921px;top:461px;width:17px;height:2px;background:#fff;"></div><div class="a" style="left:921px;top:504px;width:17px;height:2px;background:#fff;"></div><div class="t" style="left:162.5px;top:143px;color:#fff;letter-spacing:-0.4px;">Messages</div><div class="nm" style="top:164px;color:#fff;">/tb2_pfl/pfl_clk</div><div class="vl" style="top:164px;color:#fff;">1</div><svg class="a" style="left:42px;top:165px" width="15" height="15" viewBox="0 0 15 15"><path d="M7.5 0 L15 7.5 L7.5 15 L0 7.5 Z" fill="#1a8fd8"/><path d="M7.5 0 L0 7.5 L3.5 7.5 L7.5 3.5 Z" fill="#a4e4fc"/><path d="M7.5 0 L15 7.5 L11.5 7.5 L7.5 3.5 Z" fill="#1e9cdc"/><path d="M0 7.5 L7.5 15 L7.5 11.5 L3.5 7.5 Z" fill="#1a8ed2"/><path d="M15 7.5 L7.5 15 L7.5 11.5 L11.5 7.5 Z" fill="#0c6aa8"/><path d="M7.5 3.5 L11.5 7.5 L7.5 11.5 L3.5 7.5 Z" fill="#16b2f0"/></svg><div class="nm" style="top:181px;color:#fff;">/tb2_pfl/access_request</div><div class="vl" style="top:181px;color:#fff;">St0</div><svg class="a" style="left:42px;top:182px" width="15" height="15" viewBox="0 0 15 15"><path d="M7.5 0 L15 7.5 L7.5 15 L0 7.5 Z" fill="#1a8fd8"/><path d="M7.5 0 L0 7.5 L3.5 7.5 L7.5 3.5 Z" fill="#a4e4fc"/><path d="M7.5 0 L15 7.5 L11.5 7.5 L7.5 3.5 Z" fill="#1e9cdc"/><path d="M0 7.5 L7.5 15 L7.5 11.5 L3.5 7.5 Z" fill="#1a8ed2"/><path d="M15 7.5 L7.5 15 L7.5 11.5 L11.5 7.5 Z" fill="#0c6aa8"/><path d="M7.5 3.5 L11.5 7.5 L7.5 11.5 L3.5 7.5 Z" fill="#16b2f0"/></svg><div class="nm" style="top:198px;color:#fff;">/tb2_pfl/access_granted</div><div class="vl" style="top:198px;color:#fff;">Pu1</div><svg class="a" style="left:42px;top:199px" width="15" height="15" viewBox="0 0 15 15"><path d="M7.5 0 L15 7.5 L7.5 15 L0 7.5 Z" fill="#1a8fd8"/><path d="M7.5 0 L0 7.5 L3.5 7.5 L7.5 3.5 Z" fill="#a4e4fc"/><path d="M7.5 0 L15 7.5 L11.5 7.5 L7.5 3.5 Z" fill="#1e9cdc"/><path d="M0 7.5 L7.5 15 L7.5 11.5 L3.5 7.5 Z" fill="#1a8ed2"/><path d="M15 7.5 L7.5 15 L7.5 11.5 L11.5 7.5 Z" fill="#0c6aa8"/><path d="M7.5 3.5 L11.5 7.5 L7.5 11.5 L3.5 7.5 Z" fill="#16b2f0"/></svg><div class="nm" style="top:215px;color:#fff;">/tb2_pfl/pfl_nreconfigure</div><div class="vl" style="top:215px;color:#fff;">1</div><svg class="a" style="left:42px;top:216px" width="15" height="15" viewBox="0 0 15 15"><path d="M7.5 0 L15 7.5 L7.5 15 L0 7.5 Z" fill="#1a8fd8"/><path d="M7.5 0 L0 7.5 L3.5 7.5 L7.5 3.5 Z" fill="#a4e4fc"/><path d="M7.5 0 L15 7.5 L11.5 7.5 L7.5 3.5 Z" fill="#1e9cdc"/><path d="M0 7.5 L7.5 15 L7.5 11.5 L3.5 7.5 Z" fill="#1a8ed2"/><path d="M15 7.5 L7.5 15 L7.5 11.5 L11.5 7.5 Z" fill="#0c6aa8"/><path d="M7.5 3.5 L11.5 7.5 L7.5 11.5 L3.5 7.5 Z" fill="#16b2f0"/></svg><div class="nm" style="top:232px;color:#fff;">/tb2_pfl/pfl_nreset</div><div class="vl" style="top:232px;color:#fff;">1</div><svg class="a" style="left:42px;top:233px" width="15" height="15" viewBox="0 0 15 15"><path d="M7.5 0 L15 7.5 L7.5 15 L0 7.5 Z" fill="#1a8fd8"/><path d="M7.5 0 L0 7.5 L3.5 7.5 L7.5 3.5 Z" fill="#a4e4fc"/><path d="M7.5 0 L15 7.5 L11.5 7.5 L7.5 3.5 Z" fill="#1e9cdc"/><path d="M0 7.5 L7.5 15 L7.5 11.5 L3.5 7.5 Z" fill="#1a8ed2"/><path d="M15 7.5 L7.5 15 L7.5 11.5 L11.5 7.5 Z" fill="#0c6aa8"/><path d="M7.5 3.5 L11.5 7.5 L7.5 11.5 L3.5 7.5 Z" fill="#16b2f0"/></svg><div class="nm" style="top:249px;color:#fff;">/tb2_pfl/fpga_pgm</div><div class="vl" style="top:249px;color:#fff;">000</div><svg class="a" style="left:42px;top:250px" width="15" height="15" viewBox="0 0 15 15"><path d="M7.5 0 L15 7.5 L7.5 15 L0 7.5 Z" fill="#1a8fd8"/><path d="M7.5 0 L0 7.5 L3.5 7.5 L7.5 3.5 Z" fill="#a4e4fc"/><path d="M7.5 0 L15 7.5 L11.5 7.5 L7.5 3.5 Z" fill="#1e9cdc"/><path d="M0 7.5 L7.5 15 L7.5 11.5 L3.5 7.5 Z" fill="#1a8ed2"/><path d="M15 7.5 L7.5 15 L7.5 11.5 L11.5 7.5 Z" fill="#0c6aa8"/><path d="M7.5 3.5 L11.5 7.5 L7.5 11.5 L3.5 7.5 Z" fill="#16b2f0"/></svg><div class="a" style="left:37px;top:258px;width:6px;height:1px;background:#dcdcdc;"></div><svg class="a" style="left:27px;top:253px" width="10" height="10" viewBox="0 0 10 10"><g shape-rendering="crispEdges"><rect x="0" y="0" width="10" height="10" fill="#ecd4c4"/><rect x="9" y="1" width="1" height="9" fill="#d8b49c"/><rect x="1" y="9" width="9" height="1" fill="#d8b49c"/><rect x="1" y="1" width="8" height="8" fill="#fff"/><rect x="3" y="5" width="5" height="1" fill="#000"/><rect x="5" y="3" width="1" height="5" fill="#000"/></g></svg><div class="nm" style="top:266px;color:#fff;">/tb2_pfl/flash_addr</div><div class="vl" style="top:266px;color:#fff;">0800004</div><svg class="a" style="left:42px;top:267px" width="15" height="15" viewBox="0 0 15 15"><path d="M7.5 0 L15 7.5 L7.5 15 L0 7.5 Z" fill="#1a8fd8"/><path d="M7.5 0 L0 7.5 L3.5 7.5 L7.5 3.5 Z" fill="#a4e4fc"/><path d="M7.5 0 L15 7.5 L11.5 7.5 L7.5 3.5 Z" fill="#1e9cdc"/><path d="M0 7.5 L7.5 15 L7.5 11.5 L3.5 7.5 Z" fill="#1a8ed2"/><path d="M15 7.5 L7.5 15 L7.5 11.5 L11.5 7.5 Z" fill="#0c6aa8"/><path d="M7.5 3.5 L11.5 7.5 L7.5 11.5 L3.5 7.5 Z" fill="#16b2f0"/></svg><div class="a" style="left:37px;top:275px;width:6px;height:1px;background:#dcdcdc;"></div><svg class="a" style="left:27px;top:270px" width="10" height="10" viewBox="0 0 10 10"><g shape-rendering="crispEdges"><rect x="0" y="0" width="10" height="10" fill="#ecd4c4"/><rect x="9" y="1" width="1" height="9" fill="#d8b49c"/><rect x="1" y="9" width="9" height="1" fill="#d8b49c"/><rect x="1" y="1" width="8" height="8" fill="#fff"/><rect x="3" y="5" width="5" height="1" fill="#000"/><rect x="5" y="3" width="1" height="5" fill="#000"/></g></svg><div class="nm" style="top:283px;color:#fff;">/tb2_pfl/flash_data</div><div class="vl" style="top:283px;color:#fff;">zz</div><svg class="a" style="left:42px;top:284px" width="15" height="15" viewBox="0 0 15 15"><path d="M7.5 0 L15 7.5 L7.5 15 L0 7.5 Z" fill="#1a8fd8"/><path d="M7.5 0 L0 7.5 L3.5 7.5 L7.5 3.5 Z" fill="#a4e4fc"/><path d="M7.5 0 L15 7.5 L11.5 7.5 L7.5 3.5 Z" fill="#1e9cdc"/><path d="M0 7.5 L7.5 15 L7.5 11.5 L3.5 7.5 Z" fill="#1a8ed2"/><path d="M15 7.5 L7.5 15 L7.5 11.5 L11.5 7.5 Z" fill="#0c6aa8"/><path d="M7.5 3.5 L11.5 7.5 L7.5 11.5 L3.5 7.5 Z" fill="#16b2f0"/></svg><div class="a" style="left:37px;top:292px;width:6px;height:1px;background:#dcdcdc;"></div><svg class="a" style="left:27px;top:287px" width="10" height="10" viewBox="0 0 10 10"><g shape-rendering="crispEdges"><rect x="0" y="0" width="10" height="10" fill="#ecd4c4"/><rect x="9" y="1" width="1" height="9" fill="#d8b49c"/><rect x="1" y="9" width="9" height="1" fill="#d8b49c"/><rect x="1" y="1" width="8" height="8" fill="#fff"/><rect x="3" y="5" width="5" height="1" fill="#000"/><rect x="5" y="3" width="1" height="5" fill="#000"/></g></svg><div class="nm" style="top:300px;color:#fff;">/tb2_pfl/flash_nreset</div><div class="vl" style="top:300px;color:#fff;">St1</div><svg class="a" style="left:42px;top:301px" width="15" height="15" viewBox="0 0 15 15"><path d="M7.5 0 L15 7.5 L7.5 15 L0 7.5 Z" fill="#1a8fd8"/><path d="M7.5 0 L0 7.5 L3.5 7.5 L7.5 3.5 Z" fill="#a4e4fc"/><path d="M7.5 0 L15 7.5 L11.5 7.5 L7.5 3.5 Z" fill="#1e9cdc"/><path d="M0 7.5 L7.5 15 L7.5 11.5 L3.5 7.5 Z" fill="#1a8ed2"/><path d="M15 7.5 L7.5 15 L7.5 11.5 L11.5 7.5 Z" fill="#0c6aa8"/><path d="M7.5 3.5 L11.5 7.5 L7.5 11.5 L3.5 7.5 Z" fill="#16b2f0"/></svg><div class="nm" style="top:317px;color:#fff;">/tb2_pfl/flash_nce</div><div class="vl" style="top:317px;color:#fff;">St1</div><svg class="a" style="left:42px;top:318px" width="15" height="15" viewBox="0 0 15 15"><path d="M7.5 0 L15 7.5 L7.5 15 L0 7.5 Z" fill="#1a8fd8"/><path d="M7.5 0 L0 7.5 L3.5 7.5 L7.5 3.5 Z" fill="#a4e4fc"/><path d="M7.5 0 L15 7.5 L11.5 7.5 L7.5 3.5 Z" fill="#1e9cdc"/><path d="M0 7.5 L7.5 15 L7.5 11.5 L3.5 7.5 Z" fill="#1a8ed2"/><path d="M15 7.5 L7.5 15 L7.5 11.5 L11.5 7.5 Z" fill="#0c6aa8"/><path d="M7.5 3.5 L11.5 7.5 L7.5 11.5 L3.5 7.5 Z" fill="#16b2f0"/></svg><div class="nm" style="top:334px;color:#fff;">/tb2_pfl/flash_noe</div><div class="vl" style="top:334px;color:#fff;">St1</div><svg class="a" style="left:42px;top:335px" width="15" height="15" viewBox="0 0 15 15"><path d="M7.5 0 L15 7.5 L7.5 15 L0 7.5 Z" fill="#1a8fd8"/><path d="M7.5 0 L0 7.5 L3.5 7.5 L7.5 3.5 Z" fill="#a4e4fc"/><path d="M7.5 0 L15 7.5 L11.5 7.5 L7.5 3.5 Z" fill="#1e9cdc"/><path d="M0 7.5 L7.5 15 L7.5 11.5 L3.5 7.5 Z" fill="#1a8ed2"/><path d="M15 7.5 L7.5 15 L7.5 11.5 L11.5 7.5 Z" fill="#0c6aa8"/><path d="M7.5 3.5 L11.5 7.5 L7.5 11.5 L3.5 7.5 Z" fill="#16b2f0"/></svg><div class="nm" style="top:351px;color:#fff;">/tb2_pfl/flash_nwe</div><div class="vl" style="top:351px;color:#fff;">St1</div><svg class="a" style="left:42px;top:352px" width="15" height="15" viewBox="0 0 15 15"><path d="M7.5 0 L15 7.5 L7.5 15 L0 7.5 Z" fill="#1a8fd8"/><path d="M7.5 0 L0 7.5 L3.5 7.5 L7.5 3.5 Z" fill="#a4e4fc"/><path d="M7.5 0 L15 7.5 L11.5 7.5 L7.5 3.5 Z" fill="#1e9cdc"/><path d="M0 7.5 L7.5 15 L7.5 11.5 L3.5 7.5 Z" fill="#1a8ed2"/><path d="M15 7.5 L7.5 15 L7.5 11.5 L11.5 7.5 Z" fill="#0c6aa8"/><path d="M7.5 3.5 L11.5 7.5 L7.5 11.5 L3.5 7.5 Z" fill="#16b2f0"/></svg><div class="nm" style="top:368px;color:#fff;">/tb2_pfl/fpga_nconfig</div><div class="vl" style="top:368px;color:#fff;">Pu1</div><svg class="a" style="left:42px;top:369px" width="15" height="15" viewBox="0 0 15 15"><path d="M7.5 0 L15 7.5 L7.5 15 L0 7.5 Z" fill="#1a8fd8"/><path d="M7.5 0 L0 7.5 L3.5 7.5 L7.5 3.5 Z" fill="#a4e4fc"/><path d="M7.5 0 L15 7.5 L11.5 7.5 L7.5 3.5 Z" fill="#1e9cdc"/><path d="M0 7.5 L7.5 15 L7.5 11.5 L3.5 7.5 Z" fill="#1a8ed2"/><path d="M15 7.5 L7.5 15 L7.5 11.5 L11.5 7.5 Z" fill="#0c6aa8"/><path d="M7.5 3.5 L11.5 7.5 L7.5 11.5 L3.5 7.5 Z" fill="#16b2f0"/></svg><div class="nm" style="top:385px;color:#fff;">/tb2_pfl/fpga_nstatus</div><div class="vl" style="top:385px;color:#fff;">1</div><svg class="a" style="left:42px;top:386px" width="15" height="15" viewBox="0 0 15 15"><path d="M7.5 0 L15 7.5 L7.5 15 L0 7.5 Z" fill="#1a8fd8"/><path d="M7.5 0 L0 7.5 L3.5 7.5 L7.5 3.5 Z" fill="#a4e4fc"/><path d="M7.5 0 L15 7.5 L11.5 7.5 L7.5 3.5 Z" fill="#1e9cdc"/><path d="M0 7.5 L7.5 15 L7.5 11.5 L3.5 7.5 Z" fill="#1a8ed2"/><path d="M15 7.5 L7.5 15 L7.5 11.5 L11.5 7.5 Z" fill="#0c6aa8"/><path d="M7.5 3.5 L11.5 7.5 L7.5 11.5 L3.5 7.5 Z" fill="#16b2f0"/></svg><div class="nm" style="top:402px;color:#fff;">/tb2_pfl/fpga_confdone</div><div class="vl" style="top:402px;color:#fff;">0</div><svg class="a" style="left:42px;top:403px" width="15" height="15" viewBox="0 0 15 15"><path d="M7.5 0 L15 7.5 L7.5 15 L0 7.5 Z" fill="#1a8fd8"/><path d="M7.5 0 L0 7.5 L3.5 7.5 L7.5 3.5 Z" fill="#a4e4fc"/><path d="M7.5 0 L15 7.5 L11.5 7.5 L7.5 3.5 Z" fill="#1e9cdc"/><path d="M0 7.5 L7.5 15 L7.5 11.5 L3.5 7.5 Z" fill="#1a8ed2"/><path d="M15 7.5 L7.5 15 L7.5 11.5 L11.5 7.5 Z" fill="#0c6aa8"/><path d="M7.5 3.5 L11.5 7.5 L7.5 11.5 L3.5 7.5 Z" fill="#16b2f0"/></svg><div class="nm" style="top:419px;color:#fff;">/tb2_pfl/fpga_data</div><div class="vl" style="top:419px;color:#fff;">00</div><svg class="a" style="left:42px;top:420px" width="15" height="15" viewBox="0 0 15 15"><path d="M7.5 0 L15 7.5 L7.5 15 L0 7.5 Z" fill="#1a8fd8"/><path d="M7.5 0 L0 7.5 L3.5 7.5 L7.5 3.5 Z" fill="#a4e4fc"/><path d="M7.5 0 L15 7.5 L11.5 7.5 L7.5 3.5 Z" fill="#1e9cdc"/><path d="M0 7.5 L7.5 15 L7.5 11.5 L3.5 7.5 Z" fill="#1a8ed2"/><path d="M15 7.5 L7.5 15 L7.5 11.5 L11.5 7.5 Z" fill="#0c6aa8"/><path d="M7.5 3.5 L11.5 7.5 L7.5 11.5 L3.5 7.5 Z" fill="#16b2f0"/></svg><div class="a" style="left:37px;top:428px;width:6px;height:1px;background:#dcdcdc;"></div><svg class="a" style="left:27px;top:423px" width="10" height="10" viewBox="0 0 10 10"><g shape-rendering="crispEdges"><rect x="0" y="0" width="10" height="10" fill="#ecd4c4"/><rect x="9" y="1" width="1" height="9" fill="#d8b49c"/><rect x="1" y="9" width="9" height="1" fill="#d8b49c"/><rect x="1" y="1" width="8" height="8" fill="#fff"/><rect x="3" y="5" width="5" height="1" fill="#000"/><rect x="5" y="3" width="1" height="5" fill="#000"/></g></svg><div class="nm" style="top:436px;color:#000;">/tb2_pfl/fpga_dclk</div><div class="vl" style="top:436px;color:#000;">St0</div><svg class="a" style="left:42px;top:437px" width="15" height="15" viewBox="0 0 15 15"><path d="M7.5 0 L15 7.5 L7.5 15 L0 7.5 Z" fill="#1a8fd8"/><path d="M7.5 0 L0 7.5 L3.5 7.5 L7.5 3.5 Z" fill="#a4e4fc"/><path d="M7.5 0 L15 7.5 L11.5 7.5 L7.5 3.5 Z" fill="#1e9cdc"/><path d="M0 7.5 L7.5 15 L7.5 11.5 L3.5 7.5 Z" fill="#1a8ed2"/><path d="M15 7.5 L7.5 15 L7.5 11.5 L11.5 7.5 Z" fill="#0c6aa8"/><path d="M7.5 3.5 L11.5 7.5 L7.5 11.5 L3.5 7.5 Z" fill="#16b2f0"/></svg>
<div class="t" style="left:100px;top:469px;width:110px;text-align:right;color:#fff;">Now</div><div class="t" style="left:100px;top:489px;width:109px;text-align:right;color:#000;letter-spacing:-0.3px;">Cursor 1</div><div class="a" style="left:223px;top:464px;width:63px;height:39px;overflow:hidden;"><div class="t" style="right:9.5px;top:5px;color:#fff;">802005000 ps</div><div class="t" style="right:9.5px;top:25px;color:#000;">102108997 ps</div></div><svg class="a" style="left:22px;top:470px" width="12" height="12" viewBox="0 0 12 12"><text x="0" y="7" font-family="Liberation Sans,sans-serif" font-weight="bold" font-size="8" letter-spacing="-0.8" fill="#d8d8d8">AV</text><path d="M1.5 8.5 H9.5" stroke="#4a90f0" stroke-width="1.2"/><path d="M0 8.5 L2.5 6.5 V10.5 Z M11 8.5 L8.5 6.5 V10.5 Z" fill="#4a90f0"/></svg><svg class="a" style="left:34px;top:470px" width="12" height="12" viewBox="0 0 12 12"><rect x="0.5" y="0.5" width="10" height="8.5" fill="#e4eefa" stroke="#4c8cdc"/><rect x="0.5" y="0.5" width="10" height="2" fill="#4c8cdc"/><path d="M2 4.5 H5 M2 6.5 H5 M6.5 4.5 H9" stroke="#6c9ce0" stroke-width="1"/><path d="M3.5 9.5 L8 5.5" stroke="#4c8cf0" stroke-width="2.6" stroke-linecap="round"/><path d="M8 5.5 L10.5 3.5" stroke="#c0c4cc" stroke-width="2.2"/></svg><svg class="a" style="left:47px;top:470px" width="12" height="12" viewBox="0 0 12 12"><circle cx="5.3" cy="5.3" r="5.2" fill="#3fa43f"/><circle cx="5.3" cy="5.3" r="4.2" fill="#6cc86c"/><path d="M2.8 5.3 H7.8 M5.3 2.8 V7.8" stroke="#fff" stroke-width="2.2"/></svg><svg class="a" style="left:25px;top:489px" width="12" height="12" viewBox="0 0 12 12"><path d="M2 5 V3.2 Q2 0.8 4.6 0.8 Q7 0.8 7.4 3" fill="none" stroke="#b8b8b8" stroke-width="1.5"/><rect x="0.3" y="4.5" width="10.4" height="7.3" fill="#e8a42c"/><rect x="0.3" y="4.5" width="10.4" height="1.2" fill="#f8d078"/><rect x="1.5" y="6.5" width="8" height="3.6" fill="#f6c860"/><rect x="3.4" y="6.5" width="1.2" height="3.6" fill="#d89020"/><rect x="6.4" y="6.5" width="1.2" height="3.6" fill="#d89020"/></svg><svg class="a" style="left:38px;top:488px" width="12" height="12" viewBox="0 0 12 12"><path d="M1.5 10.5 L7 5" stroke="#4c88ec" stroke-width="3" stroke-linecap="round"/><path d="M2 10 L6.5 5.5" stroke="#8cb4f4" stroke-width="1"/><path d="M6.8 5.2 L8.6 3.4" stroke="#c4c8d0" stroke-width="2.2"/><path d="M7.6 1.2 Q6.8 3 8.4 4.2 Q9.6 5.2 11.4 4.4 L10 3 L10.6 1.8 L9 0.6 Z" fill="#d0d4dc"/></svg><svg class="a" style="left:51px;top:489px" width="12" height="12" viewBox="0 0 12 12"><circle cx="5.2" cy="5.2" r="5.2" fill="#dc3c3c"/><circle cx="5.2" cy="4.9" r="4.2" fill="#ee6464"/><rect x="2.4" y="4.2" width="5.6" height="2" fill="#fff"/></svg><svg class="a" style="left:289px;top:162px" width="629" height="342" viewBox="0 0 629 342" shape-rendering="crispEdges"><rect x="34" y="0" width="1" height="299" fill="#848484"/><rect x="105" y="0" width="1" height="299" fill="#848484"/><rect x="175" y="0" width="1" height="299" fill="#848484"/><rect x="246" y="0" width="1" height="299" fill="#848484"/><rect x="317" y="0" width="1" height="299" fill="#848484"/><rect x="387" y="0" width="1" height="299" fill="#848484"/><rect x="458" y="0" width="1" height="299" fill="#848484"/><rect x="529" y="0" width="1" height="299" fill="#848484"/><rect x="599" y="0" width="1" height="299" fill="#848484"/><path d="M0 16.5 H2.5 V4.5 H6.5 V16.5 H10.5 V4.5 H13.5 V16.5 H17.5 V4.5 H20.5 V16.5 H24.5 V4.5 H27.5 V16.5 H31.5 V4.5 H34.5 V16.5 H38.5 V4.5 H41.5 V16.5 H45.5 V4.5 H48.5 V16.5 H52.5 V4.5 H55.5 V16.5 H59.5 V4.5 H62.5 V16.5 H66.5 V4.5 H70.5 V16.5 H73.5 V4.5 H77.5 V16.5 H80.5 V4.5 H84.5 V16.5 H87.5 V4.5 H91.5 V16.5 H94.5 V4.5 H98.5 V16.5 H101.5 V4.5 H105.5 V16.5 H108.5 V4.5 H112.5 V16.5 H115.5 V4.5 H119.5 V16.5 H122.5 V4.5 H126.5 V16.5 H130.5 V4.5 H133.5 V16.5 H137.5 V4.5 H140.5 V16.5 H144.5 V4.5 H147.5 V16.5 H151.5 V4.5 H154.5 V16.5 H158.5 V4.5 H161.5 V16.5 H165.5 V4.5 H168.5 V16.5 H172.5 V4.5 H175.5 V16.5 H179.5 V4.5 H183.5 V16.5 H186.5 V4.5 H190.5 V16.5 H193.5 V4.5 H197.5 V16.5 H200.5 V4.5 H204.5 V16.5 H207.5 V4.5 H211.5 V16.5 H214.5 V4.5 H218.5 V16.5 H221.5 V4.5 H225.5 V16.5 H228.5 V4.5 H232.5 V16.5 H235.5 V4.5 H239.5 V16.5 H243.5 V4.5 H246.5 V16.5 H250.5 V4.5 H253.5 V16.5 H257.5 V4.5 H260.5 V16.5 H264.5 V4.5 H267.5 V16.5 H271.5 V4.5 H274.5 V16.5 H278.5 V4.5 H281.5 V16.5 H285.5 V4.5 H288.5 V16.5 H292.5 V4.5 H296.5 V16.5 H299.5 V4.5 H303.5 V16.5 H306.5 V4.5 H310.5 V16.5 H313.5 V4.5 H317.5 V16.5 H320.5 V4.5 H324.5 V16.5 H327.5 V4.5 H331.5 V16.5 H334.5 V4.5 H338.5 V16.5 H341.5 V4.5 H345.5 V16.5 H348.5 V4.5 H352.5 V16.5 H356.5 V4.5 H359.5 V16.5 H363.5 V4.5 H366.5 V16.5 H370.5 V4.5 H373.5 V16.5 H377.5 V4.5 H380.5 V16.5 H384.5 V4.5 H387.5 V16.5 H391.5 V4.5 H394.5 V16.5 H398.5 V4.5 H401.5 V16.5 H405.5 V4.5 H408.5 V16.5 H412.5 V4.5 H416.5 V16.5 H419.5 V4.5 H423.5 V16.5 H426.5 V4.5 H430.5 V16.5 H433.5 V4.5 H437.5 V16.5 H440.5 V4.5 H444.5 V16.5 H447.5 V4.5 H451.5 V16.5 H454.5 V4.5 H458.5 V16.5 H461.5 V4.5 H465.5 V16.5 H469.5 V4.5 H472.5 V16.5 H476.5 V4.5 H479.5 V16.5 H483.5 V4.5 H486.5 V16.5 H490.5 V4.5 H493.5 V16.5 H497.5 V4.5 H500.5 V16.5 H504.5 V4.5 H507.5 V16.5 H511.5 V4.5 H514.5 V16.5 H518.5 V4.5 H521.5 V16.5 H525.5 V4.5 H529.5 V16.5 H532.5 V4.5 H536.5 V16.5 H539.5 V4.5 H543.5 V16.5 H546.5 V4.5 H550.5 V16.5 H553.5 V4.5 H557.5 V16.5 H560.5 V4.5 H564.5 V16.5 H567.5 V4.5 H571.5 V16.5 H574.5 V4.5 H578.5 V16.5 H582.5 V4.5 H585.5 V16.5 H589.5 V4.5 H592.5 V16.5 H596.5 V4.5 H599.5 V16.5 H603.5 V4.5 H606.5 V16.5 H610.5 V4.5 H613.5 V16.5 H617.5 V4.5 H620.5 V16.5 H624.5 V4.5 H627.5 V16.5 H629" fill="none" stroke="#00ff00" stroke-width="1"/><path d="M0 33.5 H115.5 V21.5 H518.5 V33.5 H629" fill="none" stroke="#00ff00" stroke-width="1"/><path d="M0 55.5 H629" fill="none" stroke="#00ff00" stroke-width="1"/><path d="M0 72.5 H629" fill="none" stroke="#00ff00" stroke-width="1"/><path d="M0 140.5 H629" fill="none" stroke="#00ff00" stroke-width="1"/><path d="M0 157.5 H122.5 V169.5 H518.5 V157.5 H629" fill="none" stroke="#00ff00" stroke-width="1"/><path d="M0 174.5 H122.5 V186.5 H518.5 V174.5 H629" fill="none" stroke="#00ff00" stroke-width="1"/><path d="M0 191.5 H629" fill="none" stroke="#00ff00" stroke-width="1"/><path d="M0 225.5 H629" fill="none" stroke="#00ff00" stroke-width="1"/><path d="M0 254.5 H629" fill="none" stroke="#00ff00" stroke-width="1"/><path d="M0 288.5 H629" fill="none" stroke="#00ff00" stroke-width="1"/><path d="M0 38.5 H629" fill="none" stroke="#fff" stroke-width="1" stroke-dasharray="3 3"/><path d="M0 208.5 H629" fill="none" stroke="#fff" stroke-width="1" stroke-dasharray="3 3"/><rect x="0" y="89" width="629" height="1" fill="#a9f0a9"/><rect x="0" y="101" width="629" height="1" fill="#a9f0a9"/><rect x="199" y="107" width="1" height="11" fill="#a9f0a9"/><rect x="0" y="106" width="199" height="1" fill="#a9f0a9"/><rect x="0" y="118" width="199" height="1" fill="#a9f0a9"/><rect x="201" y="107" width="1" height="11" fill="#a9f0a9"/><rect x="206" y="107" width="1" height="11" fill="#a9f0a9"/><rect x="202" y="106" width="4" height="1" fill="#a9f0a9"/><rect x="202" y="118" width="4" height="1" fill="#a9f0a9"/><rect x="208" y="107" width="1" height="11" fill="#a9f0a9"/><rect x="284" y="107" width="1" height="11" fill="#a9f0a9"/><rect x="209" y="106" width="75" height="1" fill="#a9f0a9"/><rect x="209" y="118" width="75" height="1" fill="#a9f0a9"/><rect x="286" y="107" width="1" height="11" fill="#a9f0a9"/><rect x="362" y="107" width="1" height="11" fill="#a9f0a9"/><rect x="287" y="106" width="75" height="1" fill="#a9f0a9"/><rect x="287" y="118" width="75" height="1" fill="#a9f0a9"/><rect x="364" y="107" width="1" height="11" fill="#a9f0a9"/><rect x="439" y="107" width="1" height="11" fill="#a9f0a9"/><rect x="365" y="106" width="74" height="1" fill="#a9f0a9"/><rect x="365" y="118" width="74" height="1" fill="#a9f0a9"/><rect x="441" y="107" width="1" height="11" fill="#a9f0a9"/><rect x="517" y="107" width="1" height="11" fill="#a9f0a9"/><rect x="442" y="106" width="75" height="1" fill="#a9f0a9"/><rect x="442" y="118" width="75" height="1" fill="#a9f0a9"/><rect x="519" y="107" width="1" height="11" fill="#a9f0a9"/><rect x="520" y="106" width="109" height="1" fill="#a9f0a9"/><rect x="520" y="118" width="109" height="1" fill="#a9f0a9"/><rect x="0" y="259" width="629" height="1" fill="#a9f0a9"/><rect x="0" y="271" width="629" height="1" fill="#a9f0a9"/><rect x="126" y="124" width="1" height="11" fill="#a9f0a9"/><rect x="200" y="124" width="1" height="11" fill="#a9f0a9"/><rect x="127" y="123" width="73" height="1" fill="#a9f0a9"/><rect x="127" y="135" width="73" height="1" fill="#a9f0a9"/><rect x="202" y="124" width="1" height="11" fill="#a9f0a9"/><rect x="207" y="124" width="1" height="11" fill="#a9f0a9"/><rect x="203" y="123" width="4" height="1" fill="#a9f0a9"/><rect x="203" y="135" width="4" height="1" fill="#a9f0a9"/><rect x="209" y="124" width="1" height="11" fill="#a9f0a9"/><rect x="362" y="124" width="1" height="11" fill="#a9f0a9"/><rect x="210" y="123" width="152" height="1" fill="#a9f0a9"/><rect x="210" y="135" width="152" height="1" fill="#a9f0a9"/><rect x="364" y="124" width="1" height="11" fill="#a9f0a9"/><rect x="440" y="124" width="1" height="11" fill="#a9f0a9"/><rect x="365" y="123" width="75" height="1" fill="#a9f0a9"/><rect x="365" y="135" width="75" height="1" fill="#a9f0a9"/><rect x="442" y="124" width="1" height="11" fill="#a9f0a9"/><rect x="519" y="124" width="1" height="11" fill="#a9f0a9"/><rect x="443" y="123" width="76" height="1" fill="#a9f0a9"/><rect x="443" y="135" width="76" height="1" fill="#a9f0a9"/><rect x="126" y="123" width="1" height="13" fill="#000"/><rect x="127" y="123" width="1" height="13" fill="#a9f0a9"/><rect x="126" y="126" width="1" height="7" fill="#a9f0a9"/><rect x="519" y="123" width="1" height="13" fill="#000"/><rect x="518" y="124" width="1" height="11" fill="#a9f0a9"/><rect x="520" y="123" width="1" height="4" fill="#a9f0a9"/><rect x="520" y="132" width="1" height="4" fill="#a9f0a9"/><rect x="521" y="127" width="1" height="5" fill="#a9f0a9"/><rect x="519" y="127" width="1" height="1" fill="#a9f0a9"/><rect x="519" y="131" width="1" height="1" fill="#a9f0a9"/><rect x="0" y="129" width="126" height="1" fill="#0000ff"/><rect x="522" y="129" width="107" height="1" fill="#0000ff"/><rect x="7" y="305" width="1" height="4" fill="#00ff00"/><rect x="14" y="305" width="1" height="4" fill="#00ff00"/><rect x="21" y="305" width="1" height="4" fill="#00ff00"/><rect x="29" y="305" width="1" height="4" fill="#00ff00"/><rect x="41" y="305" width="1" height="4" fill="#00ff00"/><rect x="48" y="305" width="1" height="4" fill="#00ff00"/><rect x="55" y="305" width="1" height="4" fill="#00ff00"/><rect x="62" y="305" width="1" height="4" fill="#00ff00"/><rect x="69" y="305" width="1" height="4" fill="#00ff00"/><rect x="76" y="305" width="1" height="4" fill="#00ff00"/><rect x="83" y="305" width="1" height="4" fill="#00ff00"/><rect x="90" y="305" width="1" height="4" fill="#00ff00"/><rect x="98" y="305" width="1" height="4" fill="#00ff00"/><rect x="112" y="305" width="1" height="4" fill="#00ff00"/><rect x="119" y="305" width="1" height="4" fill="#00ff00"/><rect x="126" y="305" width="1" height="4" fill="#00ff00"/><rect x="133" y="305" width="1" height="4" fill="#00ff00"/><rect x="140" y="305" width="1" height="4" fill="#00ff00"/><rect x="147" y="305" width="1" height="4" fill="#00ff00"/><rect x="154" y="305" width="1" height="4" fill="#00ff00"/><rect x="161" y="305" width="1" height="4" fill="#00ff00"/><rect x="169" y="305" width="1" height="4" fill="#00ff00"/><rect x="182" y="305" width="1" height="4" fill="#00ff00"/><rect x="189" y="305" width="1" height="4" fill="#00ff00"/><rect x="196" y="305" width="1" height="4" fill="#00ff00"/><rect x="203" y="305" width="1" height="4" fill="#00ff00"/><rect x="210" y="305" width="1" height="4" fill="#00ff00"/><rect x="217" y="305" width="1" height="4" fill="#00ff00"/><rect x="224" y="305" width="1" height="4" fill="#00ff00"/><rect x="231" y="305" width="1" height="4" fill="#00ff00"/><rect x="239" y="305" width="1" height="4" fill="#00ff00"/><rect x="253" y="305" width="1" height="4" fill="#00ff00"/><rect x="260" y="305" width="1" height="4" fill="#00ff00"/><rect x="267" y="305" width="1" height="4" fill="#00ff00"/><rect x="274" y="305" width="1" height="4" fill="#00ff00"/><rect x="281" y="305" width="1" height="4" fill="#00ff00"/><rect x="288" y="305" width="1" height="4" fill="#00ff00"/><rect x="295" y="305" width="1" height="4" fill="#00ff00"/><rect x="302" y="305" width="1" height="4" fill="#00ff00"/><rect x="310" y="305" width="1" height="4" fill="#00ff00"/><rect x="324" y="305" width="1" height="4" fill="#00ff00"/><rect x="331" y="305" width="1" height="4" fill="#00ff00"/><rect x="338" y="305" width="1" height="4" fill="#00ff00"/><rect x="345" y="305" width="1" height="4" fill="#00ff00"/><rect x="352" y="305" width="1" height="4" fill="#00ff00"/><rect x="359" y="305" width="1" height="4" fill="#00ff00"/><rect x="366" y="305" width="1" height="4" fill="#00ff00"/><rect x="373" y="305" width="1" height="4" fill="#00ff00"/><rect x="381" y="305" width="1" height="4" fill="#00ff00"/><rect x="394" y="305" width="1" height="4" fill="#00ff00"/><rect x="401" y="305" width="1" height="4" fill="#00ff00"/><rect x="408" y="305" width="1" height="4" fill="#00ff00"/><rect x="415" y="305" width="1" height="4" fill="#00ff00"/><rect x="422" y="305" width="1" height="4" fill="#00ff00"/><rect x="429" y="305" width="1" height="4" fill="#00ff00"/><rect x="436" y="305" width="1" height="4" fill="#00ff00"/><rect x="443" y="305" width="1" height="4" fill="#00ff00"/><rect x="451" y="305" width="1" height="4" fill="#00ff00"/><rect x="465" y="305" width="1" height="4" fill="#00ff00"/><rect x="472" y="305" width="1" height="4" fill="#00ff00"/><rect x="479" y="305" width="1" height="4" fill="#00ff00"/><rect x="486" y="305" width="1" height="4" fill="#00ff00"/><rect x="493" y="305" width="1" height="4" fill="#00ff00"/><rect x="500" y="305" width="1" height="4" fill="#00ff00"/><rect x="507" y="305" width="1" height="4" fill="#00ff00"/><rect x="514" y="305" width="1" height="4" fill="#00ff00"/><rect x="522" y="305" width="1" height="4" fill="#00ff00"/><rect x="536" y="305" width="1" height="4" fill="#00ff00"/><rect x="543" y="305" width="1" height="4" fill="#00ff00"/><rect x="550" y="305" width="1" height="4" fill="#00ff00"/><rect x="557" y="305" width="1" height="4" fill="#00ff00"/><rect x="564" y="305" width="1" height="4" fill="#00ff00"/><rect x="571" y="305" width="1" height="4" fill="#00ff00"/><rect x="578" y="305" width="1" height="4" fill="#00ff00"/><rect x="585" y="305" width="1" height="4" fill="#00ff00"/><rect x="593" y="305" width="1" height="4" fill="#00ff00"/><rect x="606" y="305" width="1" height="4" fill="#00ff00"/><rect x="613" y="305" width="1" height="4" fill="#00ff00"/><rect x="620" y="305" width="1" height="4" fill="#00ff00"/><rect x="627" y="305" width="1" height="4" fill="#00ff00"/><rect x="34" y="302" width="1" height="7" fill="#00ff00"/><rect x="105" y="302" width="1" height="7" fill="#00ff00"/><rect x="175" y="302" width="1" height="7" fill="#00ff00"/><rect x="246" y="302" width="1" height="7" fill="#00ff00"/><rect x="317" y="302" width="1" height="7" fill="#00ff00"/><rect x="387" y="302" width="1" height="7" fill="#00ff00"/><rect x="458" y="302" width="1" height="7" fill="#00ff00"/><rect x="529" y="302" width="1" height="7" fill="#00ff00"/><rect x="599" y="302" width="1" height="7" fill="#00ff00"/><rect x="0" y="324" width="629" height="1" fill="#848484"/></svg><div class="wv" style="left:290.5px;top:252px;">000</div><div class="wv" style="left:290.5px;top:269px;">0800080</div><div class="wv" style="left:498px;top:269px;">0800000</div><div class="wv" style="left:576px;top:269px;">0800001</div><div class="wv" style="left:654px;top:269px;">0800002</div><div class="wv" style="left:731px;top:269px;">0800003</div><div class="wv" style="left:809px;top:269px;">0800004</div><div class="wv" style="left:417px;top:286px;">03</div><div class="wv" style="left:499px;top:286px;">00</div><div class="wv" style="left:654px;top:286px;">a0</div><div class="wv" style="left:732px;top:286px;">c0</div><div class="wv" style="left:290.5px;top:422px;">00</div><div class="gl" style="left:343.8px;top:474px;width:100px;text-align:center;">101000000 ps</div><div class="gl" style="left:484.8px;top:474px;width:100px;text-align:center;">101200000 ps</div><div class="gl" style="left:625.8px;top:474px;width:100px;text-align:center;">101400000 ps</div><div class="gl" style="left:767.8px;top:474px;width:100px;text-align:center;">101600000 ps</div>
<div class="a dither" style="left:22px;top:507px;width:198px;height:17px;"></div><div class="sbb" style="left:22px;top:507px;width:17px;height:17px;"><svg class="a" style="left:0;top:0" width="15" height="15" viewBox="0 0 15 15"><path d="M9 4 L9 11 L5.5 7.5 Z" fill="#aca899"/></svg></div><div class="sbb" style="left:203px;top:507px;width:17px;height:17px;"><svg class="a" style="left:0;top:0" width="15" height="15" viewBox="0 0 15 15"><path d="M6 4 L6 11 L9.5 7.5 Z" fill="#aca899"/></svg></div><div class="a dither" style="left:223px;top:507px;width:63px;height:17px;"></div><div class="sbb" style="left:223px;top:507px;width:17px;height:17px;"><svg class="a" style="left:0;top:0" width="15" height="15" viewBox="0 0 15 15"><path d="M9 4 L9 11 L5.5 7.5 Z" fill="#000"/></svg></div><div class="sbb" style="left:270px;top:507px;width:17px;height:17px;"><svg class="a" style="left:0;top:0" width="15" height="15" viewBox="0 0 15 15"><path d="M6 4 L6 11 L9.5 7.5 Z" fill="#000"/></svg></div><div class="sbb" style="left:240px;top:507px;width:12px;height:17px;"></div><div class="a" style="left:289px;top:506px;width:629px;height:18px;box-sizing:border-box;background:#d4d0c8;border-top:1px solid #8a8778;border-left:1px solid #8a8778;border-right:1px solid #fff;border-bottom:1px solid #fff;"></div><div class="sbb" style="left:291px;top:508px;width:14px;height:15px;"><svg class="a" style="left:0;top:0" width="13" height="13" viewBox="0 0 13 13"><path d="M8 3 L8 10 L4.5 6.5 Z" fill="#000"/></svg></div><div class="sbb" style="left:902px;top:508px;width:15px;height:15px;"><svg class="a" style="left:0;top:0" width="13" height="13" viewBox="0 0 13 13"><path d="M5 3 L5 10 L8.5 6.5 Z" fill="#000"/></svg></div><div class="sbb" style="left:381px;top:508px;width:9px;height:15px;"></div><div class="a dither" style="left:921px;top:162px;width:17px;height:299px;box-sizing:border-box;border-left:1px solid #8a8778;border-top:1px solid #8a8778;border-right:1px solid #fff;border-bottom:1px solid #fff;"></div><div class="sbb" style="left:922px;top:163px;width:15px;height:15px;"><svg class="a" style="left:0;top:0" width="13" height="13" viewBox="0 0 13 13"><path d="M3 8 H10 L6.5 4.5 Z" fill="#000"/></svg></div><div class="sbb" style="left:922px;top:178px;width:15px;height:266px;"><div class="a" style="left:0px;top:247px;width:12px;height:16px;background:#fff;"></div></div><div class="sbb" style="left:922px;top:445px;width:15px;height:15px;"><svg class="a" style="left:0;top:0" width="13" height="13" viewBox="0 0 13 13"><path d="M3 4.5 H10 L6.5 8 Z" fill="#000"/></svg></div>
<div class="a" style="left:11px;top:528px;width:170px;height:19px;box-sizing:border-box;border-top:1px solid #9d9a8a;border-left:1px solid #9d9a8a;border-right:1px solid #fff;border-bottom:1px solid #fff;"></div><div class="a" style="left:181px;top:528px;width:745px;height:19px;box-sizing:border-box;border-top:1px solid #9d9a8a;border-left:1px solid #9d9a8a;border-right:1px solid #fff;border-bottom:1px solid #fff;"></div><div class="t" style="left:17.6px;top:531px;letter-spacing:-0.1px;">100850836 ps to 101741530 ps</div><div class="t" style="left:187.5px;top:531px;">Now: 802,005 ns</div><div class="t" style="left:278px;top:531px;">Delta: 0</div><svg class="a" style="left:929px;top:535px" width="12" height="12" viewBox="0 0 12 12" shape-rendering="crispEdges"><rect x="2" y="11" width="1" height="1" fill="#8d8a7a"/><rect x="3" y="11" width="1" height="1" fill="#fff"/><rect x="3" y="10" width="1" height="1" fill="#8d8a7a"/><rect x="4" y="10" width="1" height="1" fill="#fff"/><rect x="4" y="9" width="1" height="1" fill="#8d8a7a"/><rect x="5" y="9" width="1" height="1" fill="#fff"/><rect x="5" y="8" width="1" height="1" fill="#8d8a7a"/><rect x="6" y="8" width="1" height="1" fill="#fff"/><rect x="6" y="7" width="1" height="1" fill="#8d8a7a"/><rect x="7" y="7" width="1" height="1" fill="#fff"/><rect x="7" y="6" width="1" height="1" fill="#8d8a7a"/><rect x="8" y="6" width="1" height="1" fill="#fff"/><rect x="8" y="5" width="1" height="1" fill="#8d8a7a"/><rect x="9" y="5" width="1" height="1" fill="#fff"/><rect x="9" y="4" width="1" height="1" fill="#8d8a7a"/><rect x="10" y="4" width="1" height="1" fill="#fff"/><rect x="10" y="3" width="1" height="1" fill="#8d8a7a"/><rect x="11" y="3" width="1" height="1" fill="#fff"/><rect x="6" y="11" width="1" height="1" fill="#8d8a7a"/><rect x="7" y="11" width="1" height="1" fill="#fff"/><rect x="7" y="10" width="1" height="1" fill="#8d8a7a"/><rect x="8" y="10" width="1" height="1" fill="#fff"/><rect x="8" y="9" width="1" height="1" fill="#8d8a7a"/><rect x="9" y="9" width="1" height="1" fill="#fff"/><rect x="9" y="8" width="1" height="1" fill="#8d8a7a"/><rect x="10" y="8" width="1" height="1" fill="#fff"/><rect x="10" y="7" width="1" height="1" fill="#8d8a7a"/><rect x="11" y="7" width="1" height="1" fill="#fff"/><rect x="10" y="11" width="1" height="1" fill="#8d8a7a"/><rect x="11" y="11" width="1" height="1" fill="#fff"/></svg>
</div>
</body></html>
